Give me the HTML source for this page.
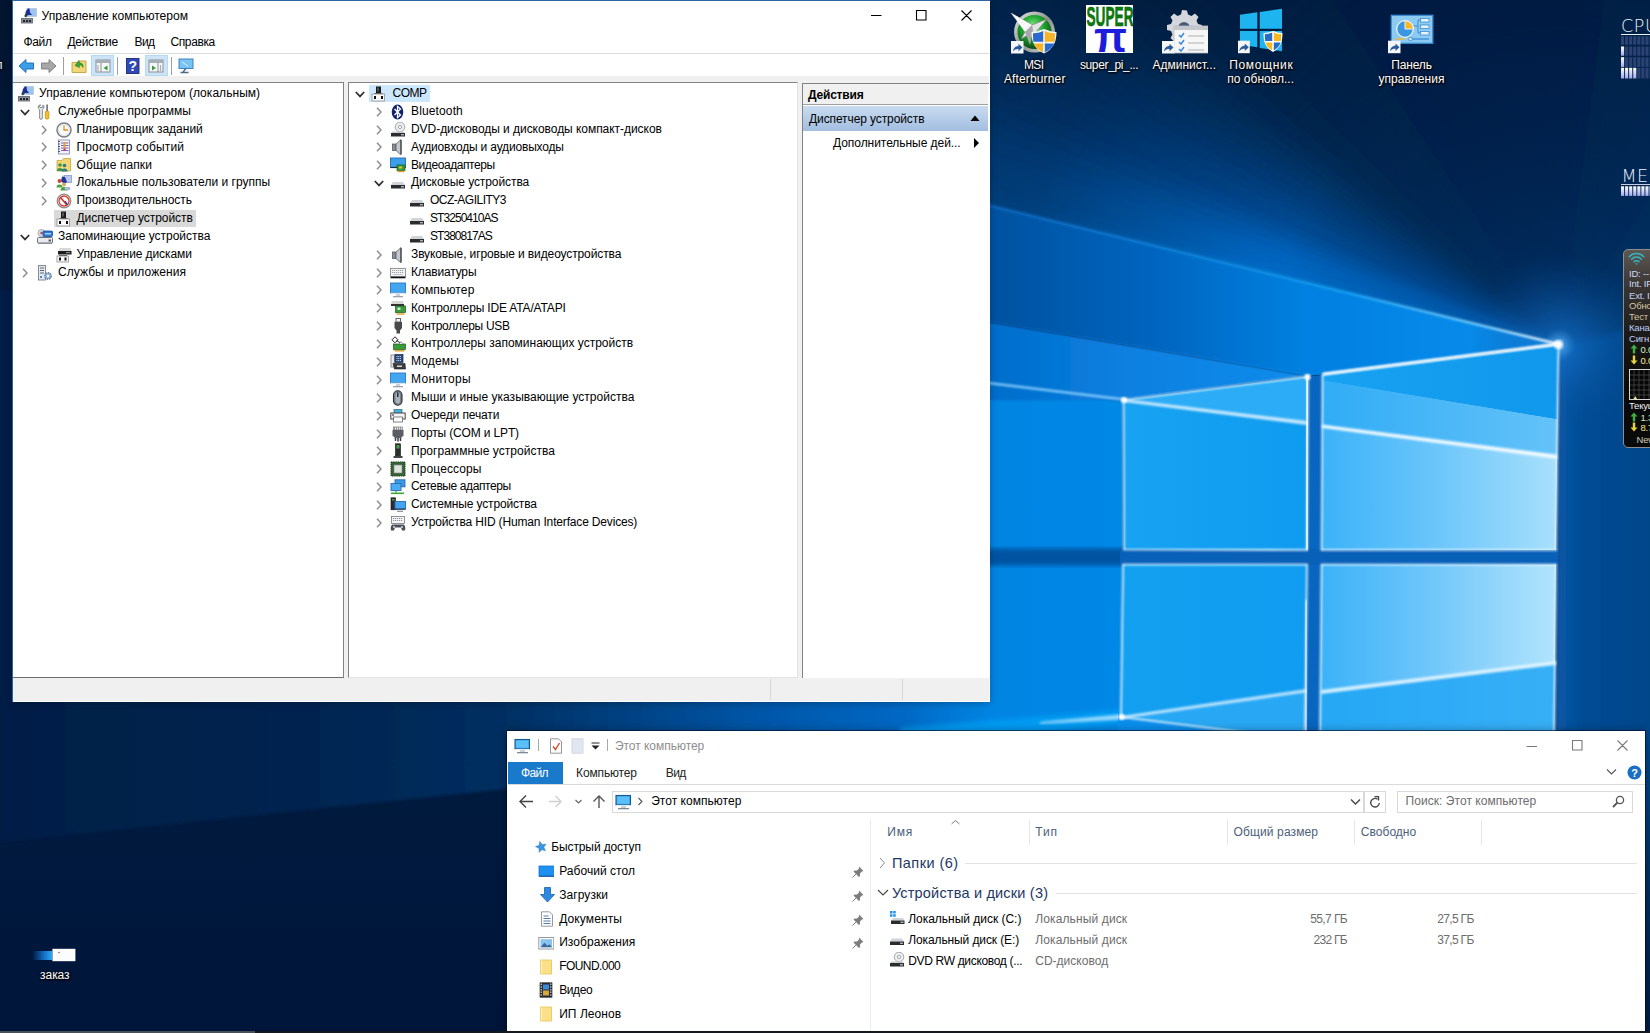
<!DOCTYPE html>
<html><head><meta charset="utf-8"><title>Desktop</title>
<style>
html,body{margin:0;padding:0}
body{width:1650px;height:1033px;overflow:hidden;position:relative;background:#031b40;font-family:"Liberation Sans",sans-serif;font-size:12px;color:#000}
.t{position:absolute;white-space:nowrap;line-height:16px;height:16px;font-size:12px;color:#000}
.dl{color:#fff;text-shadow:0 1px 2px rgba(0,0,0,.95),0 0 3px rgba(0,0,0,.8),1px 1px 1px rgba(0,0,0,.6)}
.g{position:absolute;left:1629px;white-space:nowrap;font-size:9.500px;line-height:12px;height:12px;letter-spacing:-0.200px}
.w{position:absolute;white-space:nowrap;font-family:'DejaVu Sans Light','DejaVu Sans','Liberation Sans',sans-serif;font-weight:200;font-size:17.500px;line-height:22px;height:22px;color:#eef2fb}
</style></head><body>
<svg id="wall" width="1650" height="1033" viewBox="0 0 1650 1033" style="position:absolute;left:0;top:0">
<defs>
<linearGradient id="bg" x1="0" y1="0" x2="0" y2="1">
 <stop offset="0" stop-color="#02142f"/><stop offset="0.2" stop-color="#021a3c"/><stop offset="0.78" stop-color="#001a3e"/><stop offset="1" stop-color="#00153a"/>
</linearGradient>
<radialGradient id="fanm" gradientUnits="userSpaceOnUse" cx="1559" cy="344" r="900">
 <stop offset="0" stop-color="#fff"/><stop offset="0.32" stop-color="#fff"/><stop offset="0.5" stop-color="#fff" stop-opacity="0.65"/><stop offset="0.6" stop-color="#fff" stop-opacity="0.45"/><stop offset="0.8" stop-color="#fff" stop-opacity="0.33"/><stop offset="1" stop-color="#fff" stop-opacity="0.3"/>
</radialGradient>
<mask id="fmask" maskUnits="userSpaceOnUse" x="0" y="-200" width="1650" height="1300"><rect x="0" y="-200" width="1650" height="1300" fill="url(#fanm)"/></mask>
<linearGradient id="regB" gradientUnits="userSpaceOnUse" x1="960" y1="0" x2="1559" y2="0">
 <stop offset="0" stop-color="#004e9a"/><stop offset="0.32" stop-color="#0064be"/><stop offset="0.57" stop-color="#0080e0"/><stop offset="1" stop-color="#0a90f0"/>
</linearGradient>
<linearGradient id="regC" gradientUnits="userSpaceOnUse" x1="960" y1="0" x2="1309" y2="0">
 <stop offset="0" stop-color="#0068c6"/><stop offset="0.47" stop-color="#0a80e0"/><stop offset="1" stop-color="#0a8cec"/>
</linearGradient>
<linearGradient id="beamC" gradientUnits="userSpaceOnUse" x1="0" y1="0" x2="1130" y2="0">
 <stop offset="0" stop-color="#001e46"/><stop offset="0.28" stop-color="#002450"/><stop offset="0.44" stop-color="#002e60"/><stop offset="0.56" stop-color="#004284"/><stop offset="0.66" stop-color="#0054a4"/><stop offset="0.8" stop-color="#0068c4"/><stop offset="0.875" stop-color="#0484e2"/><stop offset="1" stop-color="#0488e6"/>
</linearGradient>
<linearGradient id="pTL" gradientUnits="userSpaceOnUse" x1="1124" y1="0" x2="1307" y2="0">
 <stop offset="0" stop-color="#18a2f2"/><stop offset="1" stop-color="#0e9cf0"/>
</linearGradient>
<linearGradient id="pTR" gradientUnits="userSpaceOnUse" x1="1322" y1="0" x2="1556" y2="0">
 <stop offset="0" stop-color="#3cb2f8"/><stop offset="0.5" stop-color="#6cc6fa"/><stop offset="1" stop-color="#a8e0fc"/>
</linearGradient>
<linearGradient id="pTR1" gradientUnits="userSpaceOnUse" x1="1322" y1="0" x2="1556" y2="0">
 <stop offset="0" stop-color="#18a2f2"/><stop offset="1" stop-color="#1098ec"/>
</linearGradient>
<linearGradient id="pTR2" gradientUnits="userSpaceOnUse" x1="1322" y1="0" x2="1556" y2="0">
 <stop offset="0" stop-color="#30acf6"/><stop offset="1" stop-color="#64c2f8"/>
</linearGradient>
<linearGradient id="pBL" gradientUnits="userSpaceOnUse" x1="1124" y1="0" x2="1307" y2="0">
 <stop offset="0" stop-color="#14a0f0"/><stop offset="1" stop-color="#109cf0"/>
</linearGradient>
<linearGradient id="pBR" gradientUnits="userSpaceOnUse" x1="1322" y1="0" x2="1556" y2="0">
 <stop offset="0" stop-color="#3cb2f8"/><stop offset="0.5" stop-color="#74c8fa"/><stop offset="1" stop-color="#b2e4fc"/>
</linearGradient>
<radialGradient id="glow2" gradientUnits="userSpaceOnUse" cx="1559" cy="344" r="320">
 <stop offset="0" stop-color="#0050a0" stop-opacity="0.5"/><stop offset="0.3" stop-color="#004080" stop-opacity="0.35"/><stop offset="1" stop-color="#003060" stop-opacity="0"/>
</radialGradient>
<radialGradient id="glowR" gradientUnits="userSpaceOnUse" cx="1559" cy="345" r="90">
 <stop offset="0" stop-color="#58b4f8" stop-opacity="0.95"/><stop offset="0.18" stop-color="#1470c8" stop-opacity="0.6"/><stop offset="1" stop-color="#0a4a90" stop-opacity="0"/>
</radialGradient>
<linearGradient id="rightside" gradientUnits="userSpaceOnUse" x1="1556" y1="0" x2="1650" y2="0">
 <stop offset="0" stop-color="#0a58a8"/><stop offset="0.3" stop-color="#004c94"/><stop offset="1" stop-color="#00468a"/>
</linearGradient>
<linearGradient id="rsv" gradientUnits="userSpaceOnUse" x1="0" y1="740" x2="0" y2="1033"><stop offset="0" stop-color="#00468a"/><stop offset="0.4" stop-color="#003468"/><stop offset="1" stop-color="#001c42"/></linearGradient>
<linearGradient id="gapsh" x1="0" y1="0" x2="0" y2="1">
 <stop offset="0" stop-color="#084a92"/><stop offset="0.6" stop-color="#084a92" stop-opacity="0.9"/><stop offset="1" stop-color="#084a92" stop-opacity="0"/>
</linearGradient>
<linearGradient id="streak" gradientUnits="userSpaceOnUse" x1="1559" y1="344" x2="960" y2="198">
 <stop offset="0" stop-color="#ffffff"/><stop offset="0.12" stop-color="#7ccffc"/><stop offset="0.35" stop-color="#18a0f4"/><stop offset="1" stop-color="#0a6cc8" stop-opacity="0.6"/>
</linearGradient>
<filter id="b12" x="-10%" y="-10%" width="120%" height="120%"><feGaussianBlur stdDeviation="10"/></filter>
<filter id="b3" x="-10%" y="-10%" width="120%" height="120%"><feGaussianBlur stdDeviation="2.5"/></filter>
<filter id="b2" x="-10%" y="-10%" width="120%" height="120%"><feGaussianBlur stdDeviation="1.5"/></filter>
<filter id="b1" x="-10%" y="-10%" width="120%" height="120%"><feGaussianBlur stdDeviation="0.8"/></filter>
</defs>
<rect width="1650" height="1033" fill="url(#bg)"/>
<g mask="url(#fmask)"><g filter="url(#b1)">
<polygon points="1559,344 -578.8,-175.6 -569.0,-214.3" fill="#0070cf"/>
<polygon points="1559,344 -570.2,-209.8 -559.8,-248.4" fill="#006cc9"/>
<polygon points="1559,344 -561.0,-243.9 -548.7,-286.5" fill="#0069c5"/>
<polygon points="1559,344 -550.0,-282.1 -537.0,-324.4" fill="#0067c2"/>
<polygon points="1559,344 -538.4,-320.0 -524.6,-362.1" fill="#0065bf"/>
<polygon points="1559,344 -526.1,-357.7 -507.7,-410.1" fill="#0061b9"/>
<polygon points="1559,344 -509.3,-405.7 -489.7,-457.7" fill="#005baf"/>
<polygon points="1559,344 -491.4,-453.4 -470.7,-504.8" fill="#0055a5"/>
<polygon points="1559,344 -472.4,-500.6 -450.5,-551.5" fill="#004f9b"/>
<polygon points="1559,344 -452.4,-547.3 -430.5,-595.1" fill="#004a93"/>
<polygon points="1559,344 -432.4,-591.0 -409.5,-638.3" fill="#00488e"/>
<polygon points="1559,344 -411.6,-634.2 -387.6,-681.0" fill="#004488"/>
<polygon points="1559,344 -389.8,-677.0 -364.8,-723.3" fill="#004283"/>
<polygon points="1559,344 -367.0,-719.2 -336.7,-772.4" fill="#003e7c"/>
<polygon points="1559,344 -339.0,-768.4 -307.3,-820.8" fill="#003b76"/>
<polygon points="1559,344 -309.8,-816.9 -276.7,-868.5" fill="#00376e"/>
<polygon points="1559,344 -279.2,-864.7 -244.9,-915.4" fill="#003468"/>
<polygon points="1559,344 -247.5,-911.6 -216.3,-955.3" fill="#003162"/>
<polygon points="1559,344 -219.0,-951.6 -186.8,-994.7" fill="#002e5d"/>
<polygon points="1559,344 -189.6,-991.0 -156.5,-1033.3" fill="#002c59"/>
<polygon points="1559,344 -159.4,-1029.7 -125.3,-1071.3" fill="#002a55"/>
<polygon points="1559,344 -128.3,-1067.8 -93.3,-1108.6" fill="#002750"/>
<polygon points="1559,344 -96.3,-1105.1 -57.3,-1148.5" fill="#00264e"/>
<polygon points="1559,344 -60.4,-1145.1 -20.3,-1187.6" fill="#00254d"/>
<polygon points="1559,344 -23.5,-1184.2 17.5,-1225.7" fill="#01244c"/>
<polygon points="1559,344 14.3,-1222.5 56.4,-1262.9" fill="#01234b"/>
<polygon points="1559,344 53.0,-1259.7 96.1,-1299.1" fill="#01234b"/>
<polygon points="1559,344 92.6,-1296.0 136.6,-1334.4" fill="#01224a"/>
<polygon points="1559,344 133.1,-1331.4 178.1,-1368.6" fill="#022149"/>
<polygon points="1559,344 174.5,-1365.7 220.3,-1401.8" fill="#022048"/>
<polygon points="1559,344 216.7,-1399.0 264.0,-1434.4" fill="#022048"/>
<polygon points="1559,344 260.2,-1431.7 308.4,-1465.9" fill="#022047"/>
<polygon points="1559,344 304.6,-1463.3 353.5,-1496.3" fill="#022047"/>
<polygon points="1559,344 349.7,-1493.8 399.5,-1525.6" fill="#021f47"/>
<polygon points="1559,344 395.5,-1523.2 446.1,-1553.7" fill="#021f46"/>
<polygon points="1559,344 442.1,-1551.4 493.4,-1580.7" fill="#021f46"/>
<polygon points="1559,344 489.4,-1578.5 541.4,-1606.5" fill="#021f46"/>
<polygon points="1559,344 537.3,-1604.4 589.9,-1631.1" fill="#021f45"/>
<polygon points="1559,344 585.8,-1629.0 639.1,-1654.5" fill="#021e45"/>
<polygon points="1559,344 634.9,-1652.5 688.9,-1676.6" fill="#021e45"/>
<polygon points="1559,344 684.6,-1674.8 739.1,-1697.5" fill="#021e44"/>
<polygon points="1559,344 734.9,-1695.8 791.7,-1717.8" fill="#021e44"/>
<polygon points="1559,344 787.3,-1716.2 844.7,-1736.8" fill="#021e44"/>
<polygon points="1559,344 840.3,-1735.3 898.2,-1754.4" fill="#021e44"/>
<polygon points="1559,344 893.8,-1753.0 952.1,-1770.6" fill="#021e44"/>
<polygon points="1559,344 947.7,-1769.4 1006.4,-1785.5" fill="#021e44"/>
<polygon points="1559,344 1002.0,-1784.3 1061.1,-1798.9" fill="#021e44"/>
<polygon points="1559,344 1056.6,-1797.9 1116.1,-1811.0" fill="#021e44"/>
<polygon points="1559,344 1111.6,-1810.0 1171.4,-1821.6" fill="#021e44"/>
<polygon points="1559,344 1166.9,-1820.8 1227.0,-1830.8" fill="#021e44"/>
<polygon points="1559,344 1222.4,-1830.1 1282.8,-1838.6" fill="#021e44"/>
<polygon points="1559,344 1278.2,-1838.0 1338.7,-1844.9" fill="#021e44"/>
<polygon points="1559,344 1334.1,-1844.5 1394.8,-1849.9" fill="#021e44"/>
<polygon points="1559,344 1390.2,-1849.5 1451.0,-1853.3" fill="#021e44"/>
<polygon points="1559,344 1446.4,-1853.1 1507.3,-1855.4" fill="#021e44"/>
<polygon points="1559,344 1502.7,-1855.3 1563.6,-1856.0" fill="#021e44"/>
<polygon points="1559,344 1559.0,-1856.0 1621.2,-1855.1" fill="#021e44"/>
<polygon points="1559,344 1616.6,-1855.2 1678.7,-1852.7" fill="#021e45"/>
<polygon points="1559,344 1674.1,-1853.0 1736.2,-1848.9" fill="#021f45"/>
<polygon points="1559,344 1731.6,-1849.2 1793.5,-1843.5" fill="#021f46"/>
<polygon points="1559,344 1789.0,-1843.9 1850.7,-1836.6" fill="#021f46"/>
<polygon points="1559,344 1846.2,-1837.2 1907.7,-1828.2" fill="#022047"/>
<polygon points="1559,344 1903.2,-1828.9 1964.4,-1818.3" fill="#022047"/>
<polygon points="1559,344 1959.9,-1819.2 2020.9,-1807.0" fill="#022048"/>
<polygon points="1559,344 2016.4,-1807.9 2077.1,-1794.1" fill="#022148"/>
<polygon points="1559,344 2072.6,-1795.2 2132.9,-1779.8" fill="#022149"/>
<polygon points="1559,344 2128.4,-1781.0 2188.3,-1764.1" fill="#022149"/>
<polygon points="1559,344 2183.8,-1765.4 2243.2,-1746.9" fill="#02214a"/>
<polygon points="1559,344 2238.8,-1748.3 2297.7,-1728.3" fill="#02224a"/>
<polygon points="1559,344 2293.4,-1729.8 2351.7,-1708.2" fill="#02224b"/>
<polygon points="1559,344 2347.4,-1709.9 2405.2,-1686.8" fill="#02224b"/>
<polygon points="1559,344 2400.9,-1688.5 2458.0,-1663.9" fill="#02234c"/>
<polygon points="1559,344 2453.8,-1665.8 2510.3,-1639.7" fill="#02234c"/>
<polygon points="1559,344 2506.1,-1641.7 2561.9,-1614.1" fill="#02234d"/>
<polygon points="1559,344 2557.8,-1616.2 2612.8,-1587.2" fill="#02244d"/>
<polygon points="1559,344 2608.7,-1589.4 2663.0,-1558.9" fill="#02244e"/>
<polygon points="1559,344 2659.0,-1561.3 2712.4,-1529.4" fill="#02244e"/>
<polygon points="1559,344 2708.5,-1531.8 2761.1,-1498.6" fill="#02254f"/>
<polygon points="1559,344 2757.2,-1501.1 2808.9,-1466.5" fill="#022650"/>
<polygon points="1559,344 2805.1,-1469.1 2855.9,-1433.1" fill="#022651"/>
<polygon points="1559,344 2852.1,-1435.8 2901.9,-1398.6" fill="#022752"/>
<polygon points="1559,344 2898.3,-1401.4 2947.1,-1362.8" fill="#012752"/>
<polygon points="1559,344 2943.5,-1365.7 2991.3,-1325.9" fill="#012853"/>
<polygon points="1559,344 2987.8,-1328.9 3034.5,-1287.8" fill="#012854"/>
<polygon points="1559,344 3031.1,-1290.9 3076.7,-1248.6" fill="#012955"/>
<polygon points="1559,344 3073.4,-1251.8 3117.9,-1208.4" fill="#012a56"/>
<polygon points="1559,344 3114.6,-1211.6 3158.0,-1167.0" fill="#012a56"/>
<polygon points="1559,344 3154.8,-1170.4 3197.0,-1124.7" fill="#012b57"/>
<polygon points="1559,344 3193.9,-1128.1 3234.9,-1081.3" fill="#012c58"/>
<polygon points="1559,344 3231.9,-1084.8 3271.6,-1036.9" fill="#012c59"/>
<polygon points="1559,344 3268.7,-1040.5 3307.2,-991.6" fill="#012d5a"/>
<polygon points="1559,344 3304.4,-995.3 3341.5,-945.4" fill="#002d5a"/>
<polygon points="1559,344 3338.8,-949.1 3374.7,-898.3" fill="#002e5b"/>
<polygon points="1559,344 3372.1,-902.1 3406.6,-850.3" fill="#002e5c"/>
<polygon points="1559,344 3404.1,-854.2 3437.2,-801.6" fill="#002f5d"/>
<polygon points="1559,344 3434.8,-805.5 3466.6,-752.0" fill="#00305e"/>
<polygon points="1559,344 3464.3,-756.0 3494.0,-702.8" fill="#00305f"/>
<polygon points="1559,344 3491.8,-706.9 3520.1,-653.0" fill="#003160"/>
<polygon points="1559,344 3518.1,-657.1 3545.0,-602.4" fill="#003261"/>
<polygon points="1559,344 3543.0,-606.6 3568.6,-551.3" fill="#003263"/>
<polygon points="1559,344 3566.7,-555.5 3590.8,-499.6" fill="#003364"/>
<polygon points="1559,344 3589.1,-503.8 3611.8,-447.3" fill="#003465"/>
<polygon points="1559,344 3610.1,-451.6 3631.4,-394.5" fill="#003467"/>
<polygon points="1559,344 3629.8,-398.8 3649.6,-341.2" fill="#003568"/>
<polygon points="1559,344 3648.1,-345.6 3666.4,-287.5" fill="#003669"/>
<polygon points="1559,344 3665.1,-291.9 3681.9,-233.3" fill="#00366b"/>
<polygon points="1559,344 3680.7,-237.8 3696.0,-178.8" fill="#00376c"/>
<polygon points="1559,344 3694.9,-183.3 3708.7,-123.9" fill="#00386d"/>
<polygon points="1559,344 3707.7,-128.4 3719.9,-68.7" fill="#00386f"/>
<polygon points="1559,344 3719.1,-73.3 3729.8,-13.3" fill="#003970"/>
<polygon points="1559,344 3729.0,-17.8 3738.2,42.4" fill="#003a71"/>
</g></g>
<circle cx="1559" cy="344" r="320" fill="url(#glow2)"/>
<polygon points="1559,344 960,198 960,317 1309,376 1322,374.5" fill="url(#regB)"/>
<!-- right side of logo -->
<polygon points="1557,346 1660,322 1660,770 1554,770" fill="url(#rightside)" filter="url(#b3)"/>
<rect x="1600" y="740" width="60" height="300" fill="url(#rsv)"/>
<!-- left-lower beam -->
<polygon points="1124,400 0,290 0,842 505,789 1000,741 1124,736" fill="url(#beamC)" filter="url(#b2)"/>
<polygon points="1122,710 1122,723 900,748 900,728" fill="#00a2f8" opacity="0.8" filter="url(#b3)"/>
<polygon points="1121,714.500 1121,719.500 1040,724 1040,722" fill="#c8ecff" opacity="0.8" filter="url(#b2)"/>
<polygon points="1310,376 960,317 960,400 1124,400.5" fill="url(#regC)" filter="url(#b1)"/>
<!-- gap shadow -->
<rect x="930" y="548.500" width="196" height="17" fill="#0052a0" filter="url(#b3)"/>
<polygon points="1118,712 1553,700 1553,770 1118,770" fill="#0a8eee"/>
<polygon points="1306,377 1324,374.500 1324,770 1304,770" fill="#0866c0"/>
<rect x="1120" y="549" width="438" height="16" fill="#0860b8"/>
<circle cx="1559" cy="345" r="90" fill="url(#glowR)"/>
<polygon points="1559,343 960,196.500 960,200 1559,345.500" fill="url(#streak)" filter="url(#b1)"/>
<!-- panes -->
<polygon points="1123.5,400 1308,376.5 1307,550 1124,549.5" fill="url(#pTL)"/>
<polygon points="1124,400 1307,376.500 1307,423 " fill="#2cacf6"/>
<polygon points="1322.5,374.5 1558.5,344.5 1556,550 1321.5,550" fill="url(#pTR)"/>
<polygon points="1322.500,374.500 1558.500,344.500 1557.500,419.500 1322.400,380.600" fill="url(#pTR1)"/>
<polygon points="1322.400,380.600 1557.500,419.500 1557,456 1322.200,426" fill="url(#pTR2)"/>
<polygon points="1123,564.5 1307,564.5 1305,740 1121,717" fill="url(#pBL)"/>
<polygon points="1121,717 1306,691 1305,740" fill="#28a8f4"/>
<polygon points="1321.5,564.5 1556,564.5 1554,760 1320,740" fill="url(#pBR)"/>
<polygon points="1320.500,692 1555.500,663 1554,760 1320,740" fill="#22a6f4" opacity="0.85"/>
<!-- light lines in panes -->
<polygon points="1124,399 1307,421 1307,425 1124,402" fill="#d8f0ff" opacity="0.9" filter="url(#b1)"/>
<polygon points="1322,424.500 1557,454.500 1557,459 1322,428" fill="#f0faff" opacity="0.95" filter="url(#b1)"/>
<polygon points="1321,690 1556,661 1556,665 1321,694" fill="#e4f6ff" opacity="0.9" filter="url(#b1)"/>
<polygon points="1121,716 1306,689 1306,692.500 1121,719" fill="#d0ecff" opacity="0.85" filter="url(#b1)"/>
<!-- pane edges -->
<g fill="none" stroke="#eaf8ff" stroke-width="1.6" filter="url(#b1)">
<polygon points="1123.5,400 1308,376.5 1307,550 1124,549.5"/>
<polygon points="1322.5,374.5 1558.5,344.5 1556,550 1321.5,550"/>
<polyline points="1305,740 1121,717 1123,564.5 1307,564.5 1305,740"/>
<polyline points="1320,740 1321.5,564.5 1556,564.5 1554,760"/>
</g>
<line x1="1307.5" y1="377" x2="1307" y2="550" stroke="#ffffff" stroke-width="3" filter="url(#b1)"/>
<line x1="1306.500" y1="600" x2="1305.500" y2="735" stroke="#ffffff" stroke-width="3" filter="url(#b2)" opacity="0.8"/>
<line x1="1124" y1="399.500" x2="960" y2="379.500" stroke="#8cd0ff" stroke-width="2.5" filter="url(#b1)" opacity="0.9"/>
<line x1="1558" y1="344" x2="1323" y2="374" stroke="#ffffff" stroke-width="2.5" filter="url(#b1)"/>
<circle cx="1558.500" cy="344.500" r="4.500" fill="#fff" filter="url(#b2)"/>
<circle cx="1124" cy="400" r="3" fill="#fff" filter="url(#b1)"/>
<circle cx="1307.500" cy="377" r="3" fill="#fff" filter="url(#b1)"/>
<circle cx="1121.500" cy="717" r="3" fill="#fff" filter="url(#b1)"/>
</svg>
<svg style="position:absolute;left:1010px;top:6px" width="48" height="48" viewBox="0 0 48 48"><defs><radialGradient id="msig" cx="0.45" cy="0.35" r="0.7"><stop offset="0" stop-color="#8ff08f"/><stop offset="0.45" stop-color="#22a832"/><stop offset="1" stop-color="#083c14"/></radialGradient><linearGradient id="msir" x1="0" y1="0" x2="1" y2="1"><stop offset="0" stop-color="#e8ece8"/><stop offset="0.5" stop-color="#8a948a"/><stop offset="1" stop-color="#d0d6d0"/></linearGradient></defs><circle cx="24.500" cy="26" r="20.500" fill="url(#msir)"/><circle cx="24.500" cy="26" r="17" fill="url(#msig)"/><path d="M1 7l21 12 15-6-11 13 3 17-9-15-9 5 5-9z" fill="#e4e4e4" stroke="#7a7a7a" stroke-width="0.700"/><path d="M1 7l21 12-7 7z" fill="#f8f8f8"/><path d="M22 19l-7 7 5 13 3-15z" fill="#a8a8a8"/><path d="M21.500 26c5 0 8-1.500 12.500-3 4.500 1.500 7.500 3 12.500 3 0 10-3 17-12.500 21.500-9.500-4.500-12.500-11.500-12.500-21.500z" fill="#fff" opacity="0.92"/><path d="M23 27.300c4 0 7-1 10.200-2.300v10.800h-9.700c-0.400-2.600-0.500-5.300-0.500-8.500z" fill="#2a6ad0"/><path d="M34.800 25c3.200 1.300 6.200 2.300 10.200 2.300 0 3.200-0.100 5.900-0.500 8.500h-9.700z" fill="#f8b428"/><path d="M23.800 37.400h9.400v8.800c-5-2.400-8-5-9.400-8.800z" fill="#f8b428"/><path d="M34.800 37.400h9.400c-1.400 3.800-4.400 6.400-9.400 8.800z" fill="#2a6ad0"/><rect x="1" y="35" width="12.500" height="12.500" fill="#f4f6f8"/><path d="M3 45.5c0.500-4 3-5.500 5.500-5.500v-2.300l4 3.800-4 3.800v-2.300c-2.500 0-4 0.500-5.500 2.500z" fill="#2a5a9a"/></svg>
<div class="t dl" style="left:1023.9px;top:57px;letter-spacing:-0.622px;">MSI</div>
<div class="t dl" style="left:1003.9px;top:71px;letter-spacing:0.147px;">Afterburner</div>
<svg style="position:absolute;left:1085px;top:5.3px" width="48" height="48" viewBox="0 0 48 48"><rect x="1" y="0" width="48" height="48" fill="#fff"/><text x="1.500" y="21" font-family="Liberation Sans, sans-serif" font-weight="bold" font-size="28" fill="#0c7c0c" stroke="#0a5a0a" stroke-width="0.600" textLength="47" lengthAdjust="spacingAndGlyphs">SUPER</text><text x="9" y="47.300" font-family="Liberation Sans, sans-serif" font-weight="bold" font-size="43" fill="#1c1cdc" textLength="33" lengthAdjust="spacingAndGlyphs">π</text></svg>
<div class="t dl" style="left:1079.9px;top:57px;letter-spacing:-0.356px;">super_pi_...</div>
<svg style="position:absolute;left:1160px;top:6px" width="48" height="48" viewBox="0 0 48 48"><path d="M22 4l5 0.500 1 4 3.500 1.500 3.500-2.500 3.500 3.500-2 3.500 1.500 3.500 4 1v5l-4 1-1.500 3.500 2 3.500-3.500 3.500-3.500-2-3.500 1.500-1 4h-5l-1-4-3.500-1.500-3.500 2-3.500-3.500 2-3.500-1.500-3.500-4-1v-5l4-1 1.500-3.500-2-3.500 3.500-3.500 3.500 2.500 3.500-1.500z" fill="#d4d8dc"/><circle cx="24" cy="22" r="6" fill="#4a5a78"/><rect x="14" y="20" width="35" height="27" fill="#f6f6f6" stroke="#b8bcc0" stroke-width="0.800"/><rect x="14" y="20" width="35" height="4" fill="#c4c8cc"/><path d="M19 29l2 2 3-4M19 36l2 2 3-4M19 43l2 2 3-4" fill="none" stroke="#3a8ad8" stroke-width="1.500"/><path d="M28 30h16M28 37h16M28 44h16" stroke="#c8c8c8" stroke-width="1.500"/><rect x="2" y="35" width="12.500" height="12.500" fill="#f4f6f8"/><path d="M4 45.5c0.500-4 3-5.500 5.500-5.500v-2.300l4 3.800-4 3.800v-2.300c-2.500 0-4 0.500-5.500 2.500z" fill="#2a5a9a"/></svg>
<div class="t dl" style="left:1152.5px;top:57px;letter-spacing:0.003px;">Админист...</div>
<svg style="position:absolute;left:1238px;top:6px" width="48" height="48" viewBox="0 0 48 48"><path d="M2 8.800l17.300-2.600v16.500h-17.300z" fill="#1eb4f0"/><path d="M21.700 6l22.300-3.300v20h-22.300z" fill="#1eb4f0"/><path d="M2 25h17.300v16.200l-17.300-2.500z" fill="#1eb4f0"/><path d="M21.700 25h22.300v20.300l-22.300-3.300z" fill="#1eb4f0"/><path d="M25.500 27c4 0 6-1 9.500-2 3.500 1 5.500 2 9.500 2 0 9-2 15-9.500 19-7.500-4-9.500-10-9.500-19z" fill="#fff"/><path d="M26.800 28.200c3 0 5-0.800 7.400-1.700v8.500h-7c-0.300-2-0.400-4-0.400-6.800z" fill="#2a6ac8"/><path d="M35.800 26.500c2.400 0.900 4.400 1.700 7.400 1.700 0 2.800-0.100 4.800-0.400 6.800h-7z" fill="#f8b820"/><path d="M27.500 36.600h6.700v7.900c-3.500-2-5.700-4.400-6.700-7.900z" fill="#f8b820"/><path d="M35.800 36.600h6.700c-1 3.500-3.200 5.900-6.700 7.900z" fill="#2a6ac8"/><rect x="-0.7" y="34.7" width="12.500" height="12.500" fill="#f4f6f8"/><path d="M1.3 45.2c0.500-4 3-5.500 5.500-5.500v-2.300l4 3.800-4 3.800v-2.300c-2.500 0-4 0.500-5.500 2.500z" fill="#2a5a9a"/></svg>
<div class="t dl" style="left:1229.2px;top:57px;letter-spacing:0.688px;">Помощник</div>
<div class="t dl" style="left:1227.2px;top:71px;letter-spacing:0.030px;">по обновл...</div>
<svg style="position:absolute;left:1387px;top:6px" width="48" height="48" viewBox="0 0 48 48"><rect x="4.300" y="9.300" width="41.500" height="28" fill="#8ccaf2" stroke="#3a8cd4" stroke-width="1.300"/><circle cx="18" cy="23" r="8.300" fill="#3a96e0" stroke="#e8f4fc" stroke-width="1.300"/><path d="M18 23v-8.300a8.300 8.300 0 0 1 8.300 8.300z" fill="#f8b820" stroke="#e8f4fc" stroke-width="1"/><path d="M27 20h4v-6h3M31 20v7h3M31 20v0" fill="none" stroke="#3a8cd4" stroke-width="1"/><rect x="33.500" y="12.500" width="8.500" height="3.500" fill="#e8f4fc" stroke="#3a8cd4" stroke-width="0.800"/><rect x="33.500" y="19" width="8.500" height="3.500" fill="#e8f4fc" stroke="#3a8cd4" stroke-width="0.800"/><rect x="33.500" y="25.500" width="8.500" height="3.500" fill="#e8f4fc" stroke="#3a8cd4" stroke-width="0.800"/><path d="M8 33h10" stroke="#f8b820" stroke-width="1.300"/><path d="M25 33h17" stroke="#3a8cd4" stroke-width="1.300"/><rect x="22" y="31.300" width="3" height="3" fill="#e8f4fc" stroke="#3a8cd4" stroke-width="0.700"/><rect x="1" y="34.7" width="12.500" height="12.500" fill="#f4f6f8"/><path d="M3 45.2c0.500-4 3-5.500 5.500-5.500v-2.300l4 3.800-4 3.800v-2.300c-2.500 0-4 0.500-5.500 2.500z" fill="#2a5a9a"/></svg>
<div class="t dl" style="left:1391.2px;top:57px;letter-spacing:-0.134px;">Панель</div>
<div class="t dl" style="left:1378.5px;top:71px;letter-spacing:0.061px;">управления</div>
<svg style="position:absolute;left:30px;top:940px" width="48" height="48" viewBox="0 0 48 48"><defs><linearGradient id="zg" x1="0" y1="0" x2="1" y2="0"><stop offset="0" stop-color="#1a7ae0" stop-opacity="0"/><stop offset="0.6" stop-color="#1a86ea" stop-opacity="0.8"/><stop offset="1" stop-color="#30a8f8"/></linearGradient><filter id="zb"><feGaussianBlur stdDeviation="0.700"/></filter></defs><rect x="2" y="11" width="20" height="9" fill="url(#zg)" filter="url(#zb)"/><rect x="22.400" y="8.800" width="23" height="12.400" fill="#fcfcfc"/><circle cx="29" cy="12.500" r="0.800" fill="#666"/></svg>
<div class="t dl" style="left:40.1px;top:967px;letter-spacing:-0.059px;">заказ</div>
<div class="t dl" style="left:-4.500px;top:57px">л</div>
<div class="w" style="left:1621px;top:15px;letter-spacing:0.600px">CPU</div>
<div style="position:absolute;left:1621px;top:34px;width:30px;height:1px;background:#eef2fb"></div>
<svg style="position:absolute;left:1621px;top:36px" width="30" height="44" viewBox="0 0 30 44"><defs><linearGradient id="barg" x1="0" y1="0" x2="0" y2="1"><stop offset="0" stop-color="#ffffff"/><stop offset="1" stop-color="#a4a8ea"/></linearGradient></defs><rect x="0" y="0.3" width="3.100" height="8.5" fill="#2b4273"/><rect x="4.07" y="0.3" width="3.100" height="8.5" fill="#2b4273"/><rect x="8.14" y="0.3" width="3.100" height="8.5" fill="#2b4273"/><rect x="12.21" y="0.3" width="3.100" height="8.5" fill="#2b4273"/><rect x="16.28" y="0.3" width="3.100" height="8.5" fill="#2b4273"/><rect x="20.35" y="0.3" width="3.100" height="8.5" fill="#2b4273"/><rect x="24.42" y="0.3" width="3.100" height="8.5" fill="#2b4273"/><rect x="28.49" y="0.3" width="3.100" height="8.5" fill="#2b4273"/><rect x="0" y="10.5" width="3.100" height="9.2" fill="url(#barg)"/><rect x="4.07" y="10.5" width="3.100" height="9.2" fill="#2b4273"/><rect x="8.14" y="10.5" width="3.100" height="9.2" fill="#2b4273"/><rect x="12.21" y="10.5" width="3.100" height="9.2" fill="#2b4273"/><rect x="16.28" y="10.5" width="3.100" height="9.2" fill="#2b4273"/><rect x="20.35" y="10.5" width="3.100" height="9.2" fill="#2b4273"/><rect x="24.42" y="10.5" width="3.100" height="9.2" fill="#2b4273"/><rect x="28.49" y="10.5" width="3.100" height="9.2" fill="#2b4273"/><rect x="0" y="21.2" width="3.100" height="9.7" fill="url(#barg)"/><rect x="4.07" y="21.2" width="3.100" height="9.7" fill="#2b4273"/><rect x="8.14" y="21.2" width="3.100" height="9.7" fill="#2b4273"/><rect x="12.21" y="21.2" width="3.100" height="9.7" fill="#2b4273"/><rect x="16.28" y="21.2" width="3.100" height="9.7" fill="#2b4273"/><rect x="20.35" y="21.2" width="3.100" height="9.7" fill="#2b4273"/><rect x="24.42" y="21.2" width="3.100" height="9.7" fill="#2b4273"/><rect x="28.49" y="21.2" width="3.100" height="9.7" fill="#2b4273"/><rect x="0" y="31.8" width="3.100" height="10.7" fill="url(#barg)"/><rect x="4.07" y="31.8" width="3.100" height="10.7" fill="url(#barg)"/><rect x="8.14" y="31.8" width="3.100" height="10.7" fill="url(#barg)"/><rect x="12.21" y="31.8" width="3.100" height="10.7" fill="url(#barg)"/><rect x="16.28" y="31.8" width="3.100" height="10.7" fill="#2b4273"/><rect x="20.35" y="31.8" width="3.100" height="10.7" fill="#2b4273"/><rect x="24.42" y="31.8" width="3.100" height="10.7" fill="#2b4273"/><rect x="28.49" y="31.8" width="3.100" height="10.7" fill="#2b4273"/></svg>
<div class="w" style="left:1621.500px;top:165px;letter-spacing:0.300px">MEM</div>
<div style="position:absolute;left:1621px;top:183.500px;width:30px;height:1px;background:#c8cede"></div>
<svg style="position:absolute;left:1621px;top:185.500px" width="30" height="12" viewBox="0 0 30 12"><rect x="0" y="0.300" width="3.100" height="9.600" fill="url(#barg)"/><rect x="4.07" y="0.300" width="3.100" height="9.600" fill="url(#barg)"/><rect x="8.14" y="0.300" width="3.100" height="9.600" fill="url(#barg)"/><rect x="12.21" y="0.300" width="3.100" height="9.600" fill="url(#barg)"/><rect x="16.28" y="0.300" width="3.100" height="9.600" fill="url(#barg)"/><rect x="20.35" y="0.300" width="3.100" height="9.600" fill="url(#barg)"/><rect x="24.42" y="0.300" width="3.100" height="9.600" fill="url(#barg)"/><rect x="28.49" y="0.300" width="3.100" height="9.600" fill="url(#barg)"/></svg>
<div style="position:absolute;left:1622.500px;top:248.500px;width:40px;height:199px;background:linear-gradient(#5e5752,#3a3634 18%,#1a1816 45%,#0a0a0a 70%);border:1.500px solid #8e8e8e;border-radius:5px;box-sizing:border-box"></div>
<svg style="position:absolute;left:1628px;top:251.500px" width="17" height="13" viewBox="0 0 17 13"><g fill="none" stroke="#35b4c6" stroke-width="1.500" stroke-linecap="round"><path d="M1.200 4.800a9.800 9.800 0 0 1 14.600 0"/><path d="M3.600 7.300a6.600 6.600 0 0 1 9.800 0"/><path d="M6 9.800a3.400 3.400 0 0 1 5 0"/></g><circle cx="8.500" cy="11.800" r="0.900" fill="#35b4c6"/></svg>
<div class="g" style="top:268px;color:#ccd9f6">ID: --</div>
<div class="g" style="top:278px;color:#ccd9f6">Int. IP</div>
<div class="g" style="top:290px;color:#c4d4f8">Ext. IP</div>
<div class="g" style="top:300px;color:#d6c6a2">Обнов</div>
<div class="g" style="top:311px;color:#d6c6a2">Тест с</div>
<div class="g" style="top:322px;color:#b8cef6">Канал</div>
<div class="g" style="top:333px;color:#c0d2f6">Сигн.</div>
<div class="g" style="top:344px;left:1630px;color:#d4f0c4"><svg width="8" height="10" viewBox="0 0 8 10" style="vertical-align:-1px;margin-right:2.500px"><path d="M4 0.500l3.500 4h-2.300v5h-2.400v-5h-2.300z" fill="#3fb03f"/></svg>0.0</div>
<div class="g" style="top:355px;left:1630px;color:#f6eea0"><svg width="8" height="10" viewBox="0 0 8 10" style="vertical-align:-1px;margin-right:2.500px"><path d="M4 9.500l3.500-4h-2.300v-5h-2.400v5h-2.300z" fill="#e6d43c"/></svg>0.0</div>
<svg style="position:absolute;left:1629px;top:369px" width="24" height="31" viewBox="0 0 24 31"><rect x="0.500" y="0.500" width="30" height="30" fill="#060606" stroke="#d8d8d8"/><path d="M5 1v29M10 1v29M15 1v29M20 1v29M1 6h24M1 11h24M1 16h24M1 21h24M1 26h24" stroke="#505050" stroke-width="0.700"/><path d="M4.500 30l1.800-3 1.800 3z" fill="#e8e480"/></svg>
<div class="g" style="top:400px;color:#f0f2f6">Текущ</div>
<div class="g" style="top:412px;left:1630px;color:#c8ecc0"><svg width="8" height="10" viewBox="0 0 8 10" style="vertical-align:-1px;margin-right:2.500px"><path d="M4 0.500l3.500 4h-2.300v5h-2.400v-5h-2.300z" fill="#3fb03f"/></svg>1.3</div>
<div class="g" style="top:422px;left:1630px;color:#f6e88c"><svg width="8" height="10" viewBox="0 0 8 10" style="vertical-align:-1px;margin-right:2.500px"><path d="M4 9.500l3.500-4h-2.300v-5h-2.400v5h-2.300z" fill="#e6d43c"/></svg>8.7</div>
<div class="g" style="top:434px;left:1636.500px;color:#cfcdb6">New</div>
<div id="mmc" style="position:absolute;left:0;top:0;width:1650px;height:710px">
<div style="position:absolute;left:11.500px;top:0;width:978px;height:701.500px;background:#fff;border-left:1.500px solid #2d64a6;border-top:1px solid #2d64a6;box-sizing:border-box;box-shadow:0 1px 7px rgba(0,0,0,.28)"></div>
<div style="position:absolute;left:13px;top:1px;width:976px;height:700px;background:#fff"></div>
<!-- title -->
<svg style="position:absolute;left:21px;top:7.5px" width="16" height="16" viewBox="0 0 16 16"><rect x="6" y="0.500" width="9.500" height="8" fill="#9cc4ee" stroke="#b8c8dc" stroke-width="0.800"/><path d="M5 3l2-2.500h1.500l0.500 4 2 2.500h-7z" fill="#1c2a9c"/><path d="M3 8l3-3 1.500 1.500-2.500 3z" fill="#2a3c55"/><rect x="0.500" y="10.500" width="11" height="4.500" fill="#8a9098" stroke="#5a6068" stroke-width="0.800"/><rect x="2" y="12" width="2" height="2" fill="#22262c"/><rect x="5" y="12" width="2" height="2" fill="#22262c"/><rect x="8" y="12" width="2" height="2" fill="#22262c"/></svg>
<div class="t" style="left:41.5px;top:7.5px;font-size:12.1px">Управление компьютером</div>
<svg style="position:absolute;left:866px;top:5px" width="112" height="22" viewBox="0 0 112 22"><path d="M5 10.5h10.5 M50.5 5.5h9.5v9.5h-9.500z M95.500 5.500l10 10 M105.500 5.500l-10 10" fill="none" stroke="#000" stroke-width="1.1"/></svg>
<!-- menu -->
<div class="t" style="left:23.5px;top:33.5px;letter-spacing:-0.35px">Файл</div>
<div class="t" style="left:67.5px;top:33.5px;letter-spacing:-0.3px">Действие</div>
<div class="t" style="left:134.5px;top:33.5px;letter-spacing:-0.6px">Вид</div>
<div class="t" style="left:170.5px;top:33.5px;letter-spacing:-0.4px">Справка</div>
<div style="position:absolute;left:13px;top:53px;width:976px;height:1px;background:#dcdcdc"></div>
<!-- toolbar -->
<div style="position:absolute;left:91px;top:55px;width:23px;height:21px;background:#cce4f7;border:1px solid #b5d8f3;box-sizing:border-box"></div>
<div style="position:absolute;left:144.5px;top:55px;width:23px;height:21px;background:#cce4f7;border:1px solid #b5d8f3;box-sizing:border-box"></div>
<div style="position:absolute;left:63px;top:56.5px;width:1px;height:18px;background:#a0a0a0"></div>
<div style="position:absolute;left:116.5px;top:56.5px;width:1px;height:18px;background:#a0a0a0"></div>
<div style="position:absolute;left:170.5px;top:56.5px;width:1px;height:18px;background:#a0a0a0"></div>
<svg style="position:absolute;left:18px;top:57.5px" width="16" height="16" viewBox="0 0 16 16"><path d="M1 8l7-6.500v3.500h7.500v6h-7.500v3.500z" fill="#3a9ee8" stroke="#1a6ab8" stroke-width="0.900"/></svg>
<svg style="position:absolute;left:41px;top:57.5px" width="16" height="16" viewBox="0 0 16 16"><path d="M15 8l-7-6.500v3.500h-7.500v6h7.500v3.500z" fill="#a8a8a8" stroke="#787878" stroke-width="0.900"/></svg>
<svg style="position:absolute;left:71px;top:57.5px" width="16" height="16" viewBox="0 0 16 16"><path d="M1 4.500h5l1.500-1.500h7.500v11.500h-14z" fill="#f0d878" stroke="#c0a040" stroke-width="0.900"/><path d="M4 7.500l4-5 0.500 2.500c3 0 4 2 3.500 4.500-1-2-2-2.500-4-2.500l0.500 2.500z" fill="#3aa83a" stroke="#1a6a1a" stroke-width="0.500"/></svg>
<svg style="position:absolute;left:94.5px;top:57.5px" width="16" height="16" viewBox="0 0 16 16"><rect x="1" y="2" width="14" height="12" fill="#f4f6f8" stroke="#8a9098" stroke-width="1"/><rect x="1" y="2" width="14" height="3" fill="#a8aeb6"/><path d="M6 5v9" stroke="#8a9098" stroke-width="1"/><path d="M12.500 7.500v5l-4-2.500z" fill="#3a9a3a"/><path d="M3 7v6" stroke="#a8aeb6" stroke-width="1.200"/></svg>
<svg style="position:absolute;left:125px;top:57.5px" width="16" height="16" viewBox="0 0 16 16"><rect x="1.500" y="0.500" width="12.500" height="15" fill="#3048b8" stroke="#1a2a78" stroke-width="0.900"/><text x="7.800" y="13" font-size="14" font-weight="bold" text-anchor="middle" fill="#fff" font-family="Liberation Sans, sans-serif">?</text></svg>
<svg style="position:absolute;left:148px;top:57.5px" width="16" height="16" viewBox="0 0 16 16"><rect x="1" y="2" width="14" height="12" fill="#f4f6f8" stroke="#8a9098" stroke-width="1"/><rect x="1" y="2" width="14" height="3" fill="#a8aeb6"/><path d="M10 5v9" stroke="#8a9098" stroke-width="1"/><path d="M4 7.500v5l4-2.500z" fill="#3a9a3a"/><path d="M12.500 7v6" stroke="#a8aeb6" stroke-width="1.200"/></svg>
<svg style="position:absolute;left:178px;top:57.5px" width="16" height="16" viewBox="0 0 16 16"><rect x="1" y="1" width="14" height="9.500" fill="#7ac4f4" stroke="#3a84c0" stroke-width="1"/><path d="M8 10.500l-3 3.500M2.500 14.500h8" stroke="#4a6a8a" stroke-width="1.300"/><path d="M4 4l6 4" stroke="#d8eefc" stroke-width="1"/></svg>
<div style="position:absolute;left:13px;top:76px;width:976px;height:7px;background:#f0f0f0"></div>
<div style="position:absolute;left:13px;top:677.5px;width:976px;height:23.5px;background:#f0f0f0"></div>
<div style="position:absolute;left:770px;top:679px;width:1px;height:21px;background:#d7d7d7"></div>
<div style="position:absolute;left:902px;top:679px;width:1px;height:21px;background:#d7d7d7"></div>
<!-- panes -->
<div style="position:absolute;left:13px;top:82px;width:331px;height:596px;background:#fff;border-top:1.5px solid #828282;border-right:1.5px solid #828282;border-bottom:1px solid #6e6e6e;box-sizing:border-box"></div>
<div style="position:absolute;left:344px;top:83px;width:3.5px;height:595px;background:#f0f0f0"></div>
<div style="position:absolute;left:347.500px;top:82px;width:450px;height:596px;background:#fff;border-top:1.5px solid #828282;border-left:1.5px solid #828282;border-right:1px solid #e3e3e3;border-bottom:1px solid #e3e3e3;box-sizing:border-box"></div>
<div style="position:absolute;left:797.5px;top:83px;width:4px;height:595px;background:#f0f0f0"></div>
<div style="position:absolute;left:801.5px;top:82.5px;width:187.5px;height:595.5px;background:#fff;border-top:1.5px solid #828282;border-left:1.5px solid #828282;box-sizing:border-box"></div>
<div style="position:absolute;left:803px;top:84px;width:185px;height:20px;background:#f0f0f0;border-bottom:1px solid #a0a0a0"></div>
<div class="t" style="left:808px;top:86.500px;font-weight:bold;letter-spacing:-0.2px">Действия</div>
<div style="position:absolute;left:803px;top:105.5px;width:185px;height:25px;background:linear-gradient(#c9dbf0,#a3bee0)"></div>
<div class="t" style="left:809px;top:110.5px;letter-spacing:-0.1px">Диспетчер устройств</div>
<svg style="position:absolute;left:969px;top:114px" width="12" height="8"><path d="M1.500 7 L6 1.500 L10.500 7z" fill="#000"/></svg>
<div class="t" style="left:833px;top:135px;letter-spacing:-0.05px">Дополнительные дей...</div>
<svg style="position:absolute;left:973px;top:137px" width="7" height="12"><path d="M1 1 L6 6 L1 11z" fill="#000"/></svg>
<svg style="position:absolute;left:18px;top:85.8px" width="16" height="16" viewBox="0 0 16 16"><rect x="6" y="0.500" width="9.500" height="8" fill="#9cc4ee" stroke="#b8c8dc" stroke-width="0.800"/><path d="M5 3l2-2.500h1.500l0.500 4 2 2.500h-7z" fill="#1c2a9c"/><path d="M3 8l3-3 1.500 1.500-2.500 3z" fill="#2a3c55"/><rect x="0.500" y="10.500" width="11" height="4.500" fill="#8a9098" stroke="#5a6068" stroke-width="0.800"/><rect x="2" y="12" width="2" height="2" fill="#22262c"/><rect x="5" y="12" width="2" height="2" fill="#22262c"/><rect x="8" y="12" width="2" height="2" fill="#22262c"/></svg>
<div class="t" style="left:39px;top:85px;letter-spacing:0.047px;">Управление компьютером (локальным)</div>
<svg style="position:absolute;left:20.2px;top:108.68px" width="10" height="7" viewBox="0 0 10 7"><path d="M0.8 1 L5 5.4 L9.2 1" fill="none" stroke="#2e2e2e" stroke-width="1.700"/></svg>
<svg style="position:absolute;left:37px;top:103.68px" width="16" height="16" viewBox="0 0 16 16"><path d="M3.500 0.800a2.300 2.300 0 0 0-2 3.400l1.200 1.300v8.500a1.300 1.300 0 0 0 2.600 0v-8.500l1.200-1.300a2.300 2.300 0 0 0-0.500-3.200l-0.200 2.200-1.800 0.600-1.600-1z" fill="#f4f4f4" stroke="#70747a" stroke-width="0.900"/><rect x="9.300" y="0.500" width="1.600" height="6.500" fill="#6a6e74"/><rect x="8.300" y="7" width="3.600" height="8" rx="1.300" fill="#f2c12a" stroke="#b8860b" stroke-width="0.700"/></svg>
<div class="t" style="left:58px;top:103px;letter-spacing:0.100px;">Служебные программы</div>
<svg style="position:absolute;left:40.8px;top:124.56px" width="6" height="10" viewBox="0 0 6 10"><path d="M1 0.8 L5 5 L1 9.2" fill="none" stroke="#8e8e8e" stroke-width="1.500"/></svg>
<svg style="position:absolute;left:56px;top:121.56px" width="16" height="16" viewBox="0 0 16 16"><circle cx="8" cy="8" r="7" fill="#fdfdfd" stroke="#7a7f88" stroke-width="1.500"/><circle cx="8" cy="8" r="5.300" fill="none" stroke="#d4d8de" stroke-width="0.800"/><path d="M8 3.500v4.500h4" fill="none" stroke="#e08a1c" stroke-width="1.300"/></svg>
<div class="t" style="left:76.5px;top:121px;letter-spacing:-0.006px;">Планировщик заданий</div>
<svg style="position:absolute;left:40.8px;top:142.44px" width="6" height="10" viewBox="0 0 6 10"><path d="M1 0.8 L5 5 L1 9.2" fill="none" stroke="#8e8e8e" stroke-width="1.500"/></svg>
<svg style="position:absolute;left:56px;top:139.44px" width="16" height="16" viewBox="0 0 16 16"><rect x="2.500" y="1" width="11" height="14" fill="#f2f2fb" stroke="#8a93b0" stroke-width="0.900"/><path d="M2 2.500h2M2 5h2M2 7.500h2M2 10h2M2 12.500h2" stroke="#4a5688" stroke-width="1"/><path d="M5 4h7.500M5 6.500h7.500M5 9h7.500M5 11.500h7.500" stroke="#7a62c4" stroke-width="1.200"/><path d="M8.500 3v6" stroke="#e8a020" stroke-width="2"/><rect x="7.500" y="9.500" width="2" height="2" fill="#d03030"/></svg>
<div class="t" style="left:76.5px;top:139px;letter-spacing:0.143px;">Просмотр событий</div>
<svg style="position:absolute;left:40.8px;top:160.32px" width="6" height="10" viewBox="0 0 6 10"><path d="M1 0.8 L5 5 L1 9.2" fill="none" stroke="#8e8e8e" stroke-width="1.500"/></svg>
<svg style="position:absolute;left:56px;top:157.32px" width="16" height="16" viewBox="0 0 16 16"><path d="M1 3.500h5l1.500-2h7v12.500h-13.500z" fill="#f3d673" stroke="#c8a53a" stroke-width="0.800"/><circle cx="4" cy="8" r="1.800" fill="#3a9a4a"/><path d="M1 14a3 3 0 0 1 6 0z" fill="#3a9a4a"/><circle cx="8.500" cy="8.500" r="1.800" fill="#2d7a8a"/><path d="M5.500 14.500a3 3 0 0 1 6 0z" fill="#2d7a8a"/></svg>
<div class="t" style="left:76.5px;top:157px;letter-spacing:0.098px;">Общие папки</div>
<svg style="position:absolute;left:40.8px;top:178.2px" width="6" height="10" viewBox="0 0 6 10"><path d="M1 0.8 L5 5 L1 9.2" fill="none" stroke="#8e8e8e" stroke-width="1.500"/></svg>
<svg style="position:absolute;left:56px;top:175.2px" width="16" height="16" viewBox="0 0 16 16"><rect x="8" y="0.500" width="7.500" height="7" fill="#b9c8ee" stroke="#8a98c0" stroke-width="0.800"/><path d="M6 1.500l3 0.500 2 5-3 2-3-3z" fill="#24349a"/><circle cx="3.500" cy="6" r="2" fill="#c84a30"/><path d="M0.500 12.500a3 3 0 0 1 6 0z" fill="#4aa040"/><circle cx="8" cy="9.500" r="2" fill="#d8a860"/><path d="M4.500 15.500a3.500 3.500 0 0 1 7 0z" fill="#4aa040"/><ellipse cx="11.500" cy="13.500" rx="3" ry="1.800" fill="#a8b8d8"/></svg>
<div class="t" style="left:76.5px;top:174px;letter-spacing:0.008px;">Локальные пользователи и группы</div>
<svg style="position:absolute;left:40.8px;top:196.08px" width="6" height="10" viewBox="0 0 6 10"><path d="M1 0.8 L5 5 L1 9.2" fill="none" stroke="#8e8e8e" stroke-width="1.500"/></svg>
<svg style="position:absolute;left:56px;top:193.08px" width="16" height="16" viewBox="0 0 16 16"><circle cx="8" cy="8" r="6.800" fill="#fff" stroke="#8c8c8c" stroke-width="1.300"/><circle cx="8" cy="8" r="5" fill="none" stroke="#d43a2a" stroke-width="1.300"/><path d="M4.500 4.500l6.500 7.500" stroke="#d43a2a" stroke-width="1.800"/><path d="M9 8l2.500 4" stroke="#2a3a9a" stroke-width="1.200"/></svg>
<div class="t" style="left:76.5px;top:192px;letter-spacing:-0.064px;">Производительность</div>
<div style="position:absolute;left:54px;top:209.66px;width:142px;height:17px;background:#d9d9d9"></div>
<svg style="position:absolute;left:56px;top:210.96px" width="16" height="16" viewBox="0 0 16 16"><rect x="5" y="0.500" width="5" height="7" fill="#1a1a1a"/><rect x="6.500" y="1.500" width="1" height="4" fill="#888"/><rect x="1" y="8" width="12.500" height="7" fill="#fbfbfb" stroke="#9a9a9a" stroke-width="0.900"/><path d="M3.500 7.500h8" stroke="#6a6a6a" stroke-width="1"/><rect x="3" y="10" width="2" height="3" fill="#111"/><rect x="10" y="10" width="2" height="3" fill="#111"/></svg>
<div class="t" style="left:76.5px;top:210px;letter-spacing:-0.057px;">Диспетчер устройств</div>
<svg style="position:absolute;left:20.2px;top:233.84px" width="10" height="7" viewBox="0 0 10 7"><path d="M0.8 1 L5 5.4 L9.2 1" fill="none" stroke="#2e2e2e" stroke-width="1.700"/></svg>
<svg style="position:absolute;left:37px;top:228.84px" width="16" height="16" viewBox="0 0 16 16"><circle cx="4.500" cy="4" r="3.500" fill="#d8dce4" stroke="#9aa0aa" stroke-width="0.800"/><circle cx="4.500" cy="4" r="1.200" fill="#c04040"/><rect x="6" y="2" width="9.500" height="5.500" rx="1" fill="#2a7ad4" stroke="#1a4a90" stroke-width="0.800"/><rect x="8" y="4" width="6" height="1.500" fill="#9fd0ff"/><rect x="0.500" y="8.500" width="15" height="5.500" rx="1" fill="#e8eaee" stroke="#6a7078" stroke-width="1"/><rect x="11.500" y="10.500" width="2.500" height="2" fill="#5a6068"/><path d="M1 14.500h14" stroke="#8a9098" stroke-width="1"/></svg>
<div class="t" style="left:58px;top:228px;letter-spacing:-0.017px;">Запоминающие устройства</div>
<svg style="position:absolute;left:56px;top:246.72px" width="16" height="16" viewBox="0 0 16 16"><rect x="3" y="1" width="12" height="3" fill="#d8d8d8"/><rect x="2" y="4" width="13.500" height="3.500" fill="#1c1c1c"/><rect x="10" y="5" width="4" height="1.200" fill="#8a8a8a"/><rect x="1" y="9" width="11.500" height="6" fill="#fbfbfb" stroke="#9a9a9a" stroke-width="0.900"/><path d="M3 8.500h8" stroke="#6a6a6a" stroke-width="1"/><rect x="3" y="10.500" width="2" height="3" fill="#111"/><rect x="8.500" y="10.500" width="2" height="3" fill="#111"/></svg>
<div class="t" style="left:76.5px;top:246px;letter-spacing:-0.088px;">Управление дисками</div>
<svg style="position:absolute;left:22.2px;top:267.6px" width="6" height="10" viewBox="0 0 6 10"><path d="M1 0.8 L5 5 L1 9.2" fill="none" stroke="#8e8e8e" stroke-width="1.500"/></svg>
<svg style="position:absolute;left:37px;top:264.6px" width="16" height="16" viewBox="0 0 16 16"><rect x="1.500" y="0.500" width="7" height="14.500" fill="#e4e8ee" stroke="#7a8088" stroke-width="0.900"/><path d="M3 3h4M3 5.500h4M3 8h4" stroke="#5a6a7a" stroke-width="1.100"/><rect x="3" y="11" width="2" height="2" fill="#4a8ad0"/><circle cx="11" cy="11" r="3.300" fill="#9ab4d4" stroke="#5a7aa0" stroke-width="1.300" stroke-dasharray="1.500 1"/><circle cx="11" cy="11" r="1.200" fill="#fff"/></svg>
<div class="t" style="left:58px;top:264px;letter-spacing:0.054px;">Службы и приложения</div>
<div style="position:absolute;left:369px;top:84.5px;width:61px;height:17px;background:#cce8ff"></div>
<svg style="position:absolute;left:354.5px;top:90.8px" width="10" height="7" viewBox="0 0 10 7"><path d="M0.8 1 L5 5.4 L9.2 1" fill="none" stroke="#2e2e2e" stroke-width="1.700"/></svg>
<svg style="position:absolute;left:371px;top:85.8px" width="16" height="16" viewBox="0 0 16 16"><rect x="5" y="0.500" width="5" height="7" fill="#1a1a1a"/><rect x="6.500" y="1.500" width="1" height="4" fill="#888"/><rect x="1" y="8" width="12.500" height="7" fill="#fbfbfb" stroke="#9a9a9a" stroke-width="0.900"/><path d="M3.500 7.500h8" stroke="#6a6a6a" stroke-width="1"/><rect x="3" y="10" width="2" height="3" fill="#111"/><rect x="10" y="10" width="2" height="3" fill="#111"/></svg>
<div class="t" style="left:392.5px;top:85px;letter-spacing:-0.467px;">COMP</div>
<svg style="position:absolute;left:375.5px;top:106.68px" width="6" height="10" viewBox="0 0 6 10"><path d="M1 0.8 L5 5 L1 9.2" fill="none" stroke="#8e8e8e" stroke-width="1.500"/></svg>
<svg style="position:absolute;left:390px;top:103.68px" width="16" height="16" viewBox="0 0 16 16"><ellipse cx="7.500" cy="8" rx="5.800" ry="7.500" fill="#10246a"/><path d="M4.500 5l6 6-3 2.500v-11l3 2.500-6 6" fill="none" stroke="#fff" stroke-width="1.300"/></svg>
<div class="t" style="left:411px;top:103px;letter-spacing:0.135px;">Bluetooth</div>
<svg style="position:absolute;left:375.5px;top:124.56px" width="6" height="10" viewBox="0 0 6 10"><path d="M1 0.8 L5 5 L1 9.2" fill="none" stroke="#8e8e8e" stroke-width="1.500"/></svg>
<svg style="position:absolute;left:390px;top:121.56px" width="16" height="16" viewBox="0 0 16 16"><circle cx="10" cy="5" r="4.800" fill="#eceef0" stroke="#9a9ea4" stroke-width="0.900"/><circle cx="10" cy="5" r="1.600" fill="#fff" stroke="#8a8e94" stroke-width="0.800"/><path d="M2.500 9.500h11l1.500 2h-14z" fill="#c8ccd0"/><rect x="1" y="11" width="14" height="3.500" fill="#2a2c30"/><rect x="11" y="12.300" width="3" height="1" fill="#e8e8e8"/></svg>
<div class="t" style="left:411px;top:121px;letter-spacing:-0.044px;">DVD-дисководы и дисководы компакт-дисков</div>
<svg style="position:absolute;left:375.5px;top:142.44px" width="6" height="10" viewBox="0 0 6 10"><path d="M1 0.8 L5 5 L1 9.2" fill="none" stroke="#8e8e8e" stroke-width="1.500"/></svg>
<svg style="position:absolute;left:390px;top:139.44px" width="16" height="16" viewBox="0 0 16 16"><rect x="2.500" y="5" width="3.500" height="6.500" fill="#8a8e94" stroke="#4a4e54" stroke-width="0.700"/><path d="M6 5l5-4.500v15.500l-5-4.500z" fill="#c4c8cc" stroke="#5a5e64" stroke-width="0.800"/><path d="M11 1v14" stroke="#3a3e44" stroke-width="1.200"/></svg>
<div class="t" style="left:411px;top:139px;letter-spacing:-0.171px;">Аудиовходы и аудиовыходы</div>
<svg style="position:absolute;left:375.5px;top:160.32px" width="6" height="10" viewBox="0 0 6 10"><path d="M1 0.8 L5 5 L1 9.2" fill="none" stroke="#8e8e8e" stroke-width="1.500"/></svg>
<svg style="position:absolute;left:390px;top:157.32px" width="16" height="16" viewBox="0 0 16 16"><rect x="0.500" y="1" width="15" height="9.500" fill="#3aa0ee" stroke="#2a6ab0" stroke-width="0.900"/><path d="M0.500 10.500h15" stroke="#1a2a3a" stroke-width="1.200"/><rect x="7" y="8" width="8" height="5.500" fill="#3a9a3a" stroke="#1a5a1a" stroke-width="0.700"/><rect x="9" y="9.500" width="3" height="2" fill="#d8c040"/><path d="M7.500 14.500h7" stroke="#d8a020" stroke-width="1.300"/></svg>
<div class="t" style="left:411px;top:157px;letter-spacing:-0.421px;">Видеоадаптеры</div>
<svg style="position:absolute;left:373.5px;top:180.2px" width="10" height="7" viewBox="0 0 10 7"><path d="M0.8 1 L5 5.4 L9.2 1" fill="none" stroke="#2e2e2e" stroke-width="1.700"/></svg>
<svg style="position:absolute;left:390px;top:175.2px" width="16" height="16" viewBox="0 0 16 16"><path d="M3 7h10l2 3h-14z" fill="#d0d4d8"/><rect x="1" y="10" width="14" height="3.500" fill="#2a2c30"/><rect x="11" y="11.300" width="3" height="1" fill="#e8e8e8"/></svg>
<div class="t" style="left:411px;top:174px;letter-spacing:-0.084px;">Дисковые устройства</div>
<svg style="position:absolute;left:409px;top:193.08px" width="16" height="16" viewBox="0 0 16 16"><path d="M3 7h10l2 3h-14z" fill="#d0d4d8"/><rect x="1" y="10" width="14" height="3.500" fill="#2a2c30"/><rect x="11" y="11.300" width="3" height="1" fill="#e8e8e8"/></svg>
<div class="t" style="left:430px;top:192px;letter-spacing:-0.501px;">OCZ-AGILITY3</div>
<svg style="position:absolute;left:409px;top:210.96px" width="16" height="16" viewBox="0 0 16 16"><path d="M3 7h10l2 3h-14z" fill="#d0d4d8"/><rect x="1" y="10" width="14" height="3.500" fill="#2a2c30"/><rect x="11" y="11.300" width="3" height="1" fill="#e8e8e8"/></svg>
<div class="t" style="left:430px;top:210px;letter-spacing:-0.946px;">ST3250410AS</div>
<svg style="position:absolute;left:409px;top:228.84px" width="16" height="16" viewBox="0 0 16 16"><path d="M3 7h10l2 3h-14z" fill="#d0d4d8"/><rect x="1" y="10" width="14" height="3.500" fill="#2a2c30"/><rect x="11" y="11.300" width="3" height="1" fill="#e8e8e8"/></svg>
<div class="t" style="left:430px;top:228px;letter-spacing:-0.955px;">ST380817AS</div>
<svg style="position:absolute;left:375.5px;top:249.72px" width="6" height="10" viewBox="0 0 6 10"><path d="M1 0.8 L5 5 L1 9.2" fill="none" stroke="#8e8e8e" stroke-width="1.500"/></svg>
<svg style="position:absolute;left:390px;top:246.72px" width="16" height="16" viewBox="0 0 16 16"><rect x="2.500" y="5" width="3.500" height="6.500" fill="#8a8e94" stroke="#4a4e54" stroke-width="0.700"/><path d="M6 5l5-4.500v15.500l-5-4.500z" fill="#c4c8cc" stroke="#5a5e64" stroke-width="0.800"/><path d="M11 1v14" stroke="#3a3e44" stroke-width="1.200"/></svg>
<div class="t" style="left:411px;top:246px;letter-spacing:-0.119px;">Звуковые, игровые и видеоустройства</div>
<svg style="position:absolute;left:375.5px;top:267.6px" width="6" height="10" viewBox="0 0 6 10"><path d="M1 0.8 L5 5 L1 9.2" fill="none" stroke="#8e8e8e" stroke-width="1.500"/></svg>
<svg style="position:absolute;left:390px;top:264.6px" width="16" height="16" viewBox="0 0 16 16"><rect x="0.500" y="3.500" width="15" height="8" fill="#f4f4f4" stroke="#8a8a8a" stroke-width="0.900"/><path d="M0.500 12.500h15" stroke="#111" stroke-width="1.600"/><path d="M2 5.500h12M2 7.500h12M3.500 9.500h9" stroke="#9aa0a8" stroke-width="1" stroke-dasharray="1.200 0.800"/></svg>
<div class="t" style="left:411px;top:264px;letter-spacing:-0.161px;">Клавиатуры</div>
<svg style="position:absolute;left:375.5px;top:285.48px" width="6" height="10" viewBox="0 0 6 10"><path d="M1 0.8 L5 5 L1 9.2" fill="none" stroke="#8e8e8e" stroke-width="1.500"/></svg>
<svg style="position:absolute;left:390px;top:282.48px" width="16" height="16" viewBox="0 0 16 16"><rect x="0.500" y="1" width="15" height="10" fill="#42a6f0" stroke="#2a78c0" stroke-width="0.900"/><path d="M0.500 11.300h15" stroke="#e8eef4" stroke-width="1"/><path d="M6 13h4" stroke="#9aa4b0" stroke-width="1"/><path d="M3 14.700h10" stroke="#8a94a0" stroke-width="1.100"/></svg>
<div class="t" style="left:411px;top:282px;letter-spacing:0.149px;">Компьютер</div>
<svg style="position:absolute;left:375.5px;top:303.36px" width="6" height="10" viewBox="0 0 6 10"><path d="M1 0.8 L5 5 L1 9.2" fill="none" stroke="#8e8e8e" stroke-width="1.500"/></svg>
<svg style="position:absolute;left:390px;top:300.36px" width="16" height="16" viewBox="0 0 16 16"><rect x="1.500" y="1" width="12" height="3" fill="#d4d6d8"/><path d="M1 5h13" stroke="#1a1a1a" stroke-width="1.800"/><rect x="5.500" y="6" width="10" height="6.500" fill="#3a9a3a" stroke="#1a5a1a" stroke-width="0.700"/><rect x="7.500" y="7.500" width="3" height="2.500" fill="#c8e8c8"/><path d="M6.500 14h8" stroke="#d8a020" stroke-width="1.400"/></svg>
<div class="t" style="left:411px;top:300px;letter-spacing:-0.157px;">Контроллеры IDE ATA/ATAPI</div>
<svg style="position:absolute;left:375.5px;top:321.24px" width="6" height="10" viewBox="0 0 6 10"><path d="M1 0.8 L5 5 L1 9.2" fill="none" stroke="#8e8e8e" stroke-width="1.500"/></svg>
<svg style="position:absolute;left:390px;top:318.24px" width="16" height="16" viewBox="0 0 16 16"><rect x="6" y="0.500" width="4.500" height="3.500" fill="#f4f4f4" stroke="#555" stroke-width="0.900"/><path d="M4.500 4h7.500v6l-2 2.500v3h-3.500v-3l-2-2.500z" fill="#4a4a4a"/></svg>
<div class="t" style="left:411px;top:318px;letter-spacing:-0.269px;">Контроллеры USB</div>
<svg style="position:absolute;left:375.5px;top:339.12px" width="6" height="10" viewBox="0 0 6 10"><path d="M1 0.8 L5 5 L1 9.2" fill="none" stroke="#8e8e8e" stroke-width="1.500"/></svg>
<svg style="position:absolute;left:390px;top:336.12px" width="16" height="16" viewBox="0 0 16 16"><path d="M5 0.800l3 3-3 3-3-3z" fill="#fff" stroke="#222" stroke-width="1"/><path d="M6.500 4.500l4 2.500" stroke="#222" stroke-width="1"/><rect x="3.500" y="8" width="12" height="5.500" fill="#3a9a3a" stroke="#1a5a1a" stroke-width="0.700"/><path d="M9 8l2-2.500 2 2.500" fill="#e8e8e8" stroke="#666" stroke-width="0.600"/><path d="M4.500 14.800h10" stroke="#d8a020" stroke-width="1.400"/></svg>
<div class="t" style="left:411px;top:335px;letter-spacing:0.004px;">Контроллеры запоминающих устройств</div>
<svg style="position:absolute;left:375.5px;top:357px" width="6" height="10" viewBox="0 0 6 10"><path d="M1 0.8 L5 5 L1 9.2" fill="none" stroke="#8e8e8e" stroke-width="1.500"/></svg>
<svg style="position:absolute;left:390px;top:354px" width="16" height="16" viewBox="0 0 16 16"><rect x="1" y="1" width="3.500" height="12" fill="#e8e8ea" stroke="#7a7a80" stroke-width="0.800"/><rect x="5" y="0.500" width="8" height="8" fill="#2a4a7a" stroke="#1a2a4a" stroke-width="0.700"/><path d="M6.500 2.500h5M6.500 4.500h5M6.500 6.500h5" stroke="#c8d8f0" stroke-width="1" stroke-dasharray="1 0.700"/><path d="M3 9.500h12l0.500 5.500h-11z" fill="#3a3c40" stroke="#1a1a1a" stroke-width="0.600"/><rect x="7" y="11.500" width="5" height="1.500" fill="#d8d8d8"/></svg>
<div class="t" style="left:411px;top:353px;letter-spacing:0.161px;">Модемы</div>
<svg style="position:absolute;left:375.5px;top:374.88px" width="6" height="10" viewBox="0 0 6 10"><path d="M1 0.8 L5 5 L1 9.2" fill="none" stroke="#8e8e8e" stroke-width="1.500"/></svg>
<svg style="position:absolute;left:390px;top:371.88px" width="16" height="16" viewBox="0 0 16 16"><rect x="0.500" y="1" width="15" height="10" fill="#42a6f0" stroke="#2a78c0" stroke-width="0.900"/><path d="M0.500 11.300h15" stroke="#e8eef4" stroke-width="1"/><path d="M6 13h4" stroke="#9aa4b0" stroke-width="1"/><path d="M3 14.700h10" stroke="#8a94a0" stroke-width="1.100"/></svg>
<div class="t" style="left:411px;top:371px;letter-spacing:0.319px;">Мониторы</div>
<svg style="position:absolute;left:375.5px;top:392.76px" width="6" height="10" viewBox="0 0 6 10"><path d="M1 0.8 L5 5 L1 9.2" fill="none" stroke="#8e8e8e" stroke-width="1.500"/></svg>
<svg style="position:absolute;left:390px;top:389.76px" width="16" height="16" viewBox="0 0 16 16"><rect x="3.500" y="0.800" width="8.500" height="14.400" rx="4.200" fill="#7a8088" stroke="#2a2e34" stroke-width="1.100"/><rect x="5.500" y="2.500" width="4.500" height="11" rx="2.200" fill="#aab2bc"/><rect x="7" y="2.500" width="1.500" height="4.500" fill="#2a2e34"/></svg>
<div class="t" style="left:411px;top:389px;letter-spacing:0.018px;">Мыши и иные указывающие устройства</div>
<svg style="position:absolute;left:375.5px;top:410.64px" width="6" height="10" viewBox="0 0 6 10"><path d="M1 0.8 L5 5 L1 9.2" fill="none" stroke="#8e8e8e" stroke-width="1.500"/></svg>
<svg style="position:absolute;left:390px;top:407.64px" width="16" height="16" viewBox="0 0 16 16"><rect x="4" y="1.500" width="8" height="4" fill="#4ab0d8" stroke="#2a6a8a" stroke-width="0.700"/><rect x="0.800" y="5" width="14.400" height="6" fill="#f4f4f4" stroke="#444" stroke-width="1"/><rect x="3.500" y="9" width="9" height="5" fill="#fff" stroke="#666" stroke-width="0.800"/><path d="M2 7h2" stroke="#222" stroke-width="1"/></svg>
<div class="t" style="left:411px;top:407px;letter-spacing:-0.125px;">Очереди печати</div>
<svg style="position:absolute;left:375.5px;top:428.52px" width="6" height="10" viewBox="0 0 6 10"><path d="M1 0.8 L5 5 L1 9.2" fill="none" stroke="#8e8e8e" stroke-width="1.500"/></svg>
<svg style="position:absolute;left:390px;top:425.52px" width="16" height="16" viewBox="0 0 16 16"><rect x="3.500" y="1" width="9" height="3" fill="#e8e8e8" stroke="#777" stroke-width="0.700"/><path d="M4.500 1v3M6.500 1v3M8.500 1v3M10.500 1v3" stroke="#777" stroke-width="0.700"/><path d="M2.500 4h11v5.500l-2.500 2.500h-6l-2.500-2.500z" fill="#5a5e64"/><path d="M5.500 12v3M8 12v3.500M10.500 12v3" stroke="#3a3e44" stroke-width="1.500"/></svg>
<div class="t" style="left:411px;top:425px;letter-spacing:-0.152px;">Порты (COM и LPT)</div>
<svg style="position:absolute;left:375.5px;top:446.4px" width="6" height="10" viewBox="0 0 6 10"><path d="M1 0.8 L5 5 L1 9.2" fill="none" stroke="#8e8e8e" stroke-width="1.500"/></svg>
<svg style="position:absolute;left:390px;top:443.4px" width="16" height="16" viewBox="0 0 16 16"><rect x="5.500" y="0.800" width="5" height="12" fill="#2a2e2a" stroke="#111" stroke-width="0.600"/><rect x="6.500" y="2" width="3" height="3.500" fill="#4aa04a"/><path d="M3.500 14h9" stroke="#333" stroke-width="1.800"/></svg>
<div class="t" style="left:411px;top:443px;letter-spacing:0.029px;">Программные устройства</div>
<svg style="position:absolute;left:375.5px;top:464.28px" width="6" height="10" viewBox="0 0 6 10"><path d="M1 0.8 L5 5 L1 9.2" fill="none" stroke="#8e8e8e" stroke-width="1.500"/></svg>
<svg style="position:absolute;left:390px;top:461.28px" width="16" height="16" viewBox="0 0 16 16"><rect x="1" y="1" width="14" height="14" fill="#3a6a3a" stroke="#1a3a1a" stroke-width="1" stroke-dasharray="1.500 0.700"/><rect x="2.500" y="2.500" width="11" height="11" fill="#2f5a2f"/><rect x="4" y="4" width="8" height="8" fill="#dfe3df" stroke="#8a908a" stroke-width="0.700"/></svg>
<div class="t" style="left:411px;top:461px;letter-spacing:0.111px;">Процессоры</div>
<svg style="position:absolute;left:375.5px;top:482.16px" width="6" height="10" viewBox="0 0 6 10"><path d="M1 0.8 L5 5 L1 9.2" fill="none" stroke="#8e8e8e" stroke-width="1.500"/></svg>
<svg style="position:absolute;left:390px;top:479.16px" width="16" height="16" viewBox="0 0 16 16"><rect x="5" y="0.800" width="10" height="7" fill="#3a9ae8" stroke="#2a6ab0" stroke-width="0.900"/><rect x="1" y="4.500" width="10" height="7" fill="#4aaaf4" stroke="#2a6ab0" stroke-width="0.900"/><path d="M6 11.500v2" stroke="#4a4" stroke-width="1.500"/><path d="M1 14.300h13" stroke="#3aa83a" stroke-width="1.600"/></svg>
<div class="t" style="left:411px;top:478px;letter-spacing:-0.398px;">Сетевые адаптеры</div>
<svg style="position:absolute;left:375.5px;top:500.04px" width="6" height="10" viewBox="0 0 6 10"><path d="M1 0.8 L5 5 L1 9.2" fill="none" stroke="#8e8e8e" stroke-width="1.500"/></svg>
<svg style="position:absolute;left:390px;top:497.04px" width="16" height="16" viewBox="0 0 16 16"><rect x="1" y="0.800" width="4.500" height="12" fill="#2a2e34" stroke="#111" stroke-width="0.600"/><rect x="2" y="2" width="2.500" height="1.500" fill="#4aa04a"/><rect x="5" y="4.500" width="10.500" height="7.500" fill="#42a6f0" stroke="#2a6ab0" stroke-width="0.900"/><path d="M5 12.200h10.500" stroke="#1a2a3a" stroke-width="1"/><path d="M7 14.300h6" stroke="#7a8490" stroke-width="1.100"/></svg>
<div class="t" style="left:411px;top:496px;letter-spacing:-0.145px;">Системные устройства</div>
<svg style="position:absolute;left:375.5px;top:517.92px" width="6" height="10" viewBox="0 0 6 10"><path d="M1 0.8 L5 5 L1 9.2" fill="none" stroke="#8e8e8e" stroke-width="1.500"/></svg>
<svg style="position:absolute;left:390px;top:514.92px" width="16" height="16" viewBox="0 0 16 16"><rect x="1.500" y="1.500" width="13" height="7" fill="#f4f4f4" stroke="#7a7a7a" stroke-width="0.800"/><path d="M3 3.500h10M3 5.500h10" stroke="#8a90a0" stroke-width="1" stroke-dasharray="1.200 0.800"/><path d="M2.500 9.500c-2 1-2 4-1.500 6h3l1-3h6l1 3h3c0.500-2 0.500-5-1.500-6z" fill="#4a4e58"/><circle cx="4" cy="12" r="1" fill="#ddd"/><circle cx="12" cy="12" r="1" fill="#ddd"/></svg>
<div class="t" style="left:411px;top:514px;letter-spacing:-0.167px;">Устройства HID (Human Interface Devices)</div>
</div>
<div id="exp" style="position:absolute;left:0;top:0;width:1650px;height:1033px">
<div style="position:absolute;left:507px;top:731px;width:1138px;height:310px;background:#fff;box-shadow:0 0 0 1px rgba(0,12,40,.6),0 0 9px rgba(0,0,0,.35)"></div>
<svg style="position:absolute;left:514px;top:738px" width="16" height="16" viewBox="0 0 16 16"><rect x="1" y="1.500" width="14.500" height="9.500" fill="#3fa9f0" stroke="#16588c" stroke-width="1.100"/><rect x="2.200" y="2.700" width="12" height="7" fill="#5cc0f8"/><path d="M0.800 11.500h15" stroke="#e4eaf0" stroke-width="1"/><path d="M6 13h5" stroke="#9aa4b0" stroke-width="1"/><path d="M3 14.700h11" stroke="#6a7480" stroke-width="1.100"/></svg>
<div style="position:absolute;left:538px;top:739px;width:1px;height:12px;background:#a9a9a9"></div>
<svg style="position:absolute;left:547.5px;top:738px" width="16" height="16" viewBox="0 0 16 16"><path d="M2.500 0.800h8l3 3v11.400h-11z" fill="#fdfdfd" stroke="#8a8a8a" stroke-width="0.900"/><path d="M5 8.500l2.500 3 4-6.500" fill="none" stroke="#d04a2a" stroke-width="1.400"/></svg>
<svg style="position:absolute;left:570px;top:738px" width="16" height="16" viewBox="0 0 16 16"><rect x="2" y="0.800" width="11" height="14.400" fill="#e2e6f0" stroke="#d0d4e0" stroke-width="0.900"/></svg>
<svg style="position:absolute;left:591px;top:742px" width="9" height="8"><path d="M0.500 1h8" stroke="#222" stroke-width="1"/><path d="M0.500 3.500h8l-4 4z" fill="#222"/></svg>
<div style="position:absolute;left:607px;top:739px;width:1px;height:12px;background:#a9a9a9"></div>
<div class="t" style="left:614.9px;top:738px;color:#8e8e8e;letter-spacing:-0.026px;">Этот компьютер</div>
<svg style="position:absolute;left:1521px;top:735px" width="112" height="22" viewBox="0 0 112 22"><path d="M5.500 11.500h10.500 M51.500 5.500h9.500v9.500h-9.500z M96.500 5.500l10 10 M106.500 5.500l-10 10" fill="none" stroke="#7a7a7a" stroke-width="1.1"/></svg>
<div style="position:absolute;left:507.5px;top:762px;width:55px;height:22px;background:#1979ca"></div>
<div class="t" style="left:521px;top:765px;color:#fff;letter-spacing:-0.672px;">Файл</div>
<div class="t" style="left:576.1px;top:765px;color:#222;letter-spacing:-0.151px;">Компьютер</div>
<div class="t" style="left:665.8px;top:765px;color:#222;letter-spacing:-0.609px;">Вид</div>
<div style="position:absolute;left:507.5px;top:784px;width:1137px;height:1px;background:#dadbdc"></div>
<svg style="position:absolute;left:1606px;top:768px" width="12" height="8"><path d="M1 1.500l4.500 4.500 4.500-4.500" fill="none" stroke="#555" stroke-width="1.1"/></svg>
<svg style="position:absolute;left:1626.5px;top:764.5px" width="15" height="15" viewBox="0 0 15 15"><circle cx="7.500" cy="7.500" r="7" fill="#1a6fc4"/><text x="7.500" y="11.500" font-size="11" font-weight="bold" text-anchor="middle" fill="#fff" font-family="Liberation Sans, sans-serif">?</text></svg>
<svg style="position:absolute;left:518px;top:794px" width="92" height="16" viewBox="0 0 92 16"><path d="M2 7.500h13 M8 1.500l-6 6 6 6" fill="none" stroke="#444" stroke-width="1.4"/><path d="M31 7.500h12 M37.500 2l5.500 5.500-5.500 5.500" fill="none" stroke="#d0d0d0" stroke-width="1.4"/><path d="M57.500 6l3 3 3-3" fill="none" stroke="#666" stroke-width="1.2"/><path d="M81 14v-12 M75.500 7.500l5.500-5.500 5.500 5.500" fill="none" stroke="#555" stroke-width="1.4"/></svg>
<div style="position:absolute;left:612px;top:790.5px;width:752px;height:22px;border:1px solid #d9d9d9;box-sizing:border-box;background:#fff"></div>
<svg style="position:absolute;left:615px;top:793.5px" width="16" height="16" viewBox="0 0 16 16"><rect x="1" y="1.500" width="14.500" height="9.500" fill="#3fa9f0" stroke="#16588c" stroke-width="1.100"/><rect x="2.200" y="2.700" width="12" height="7" fill="#5cc0f8"/><path d="M0.800 11.500h15" stroke="#e4eaf0" stroke-width="1"/><path d="M6 13h5" stroke="#9aa4b0" stroke-width="1"/><path d="M3 14.700h11" stroke="#6a7480" stroke-width="1.100"/></svg>
<svg style="position:absolute;left:637px;top:797px" width="6" height="9"><path d="M1.500 1l3.500 3.500-3.500 3.500" fill="none" stroke="#555" stroke-width="1.1"/></svg>
<div class="t" style="left:651.2px;top:793px;letter-spacing:0.036px;">Этот компьютер</div>
<svg style="position:absolute;left:1350px;top:798px" width="11" height="8"><path d="M1 1.500l4.500 4.500 4.500-4.500" fill="none" stroke="#444" stroke-width="1.4"/></svg>
<div style="position:absolute;left:1363.500px;top:790.5px;width:22px;height:22px;border:1px solid #d9d9d9;box-sizing:border-box;background:#fff"></div>
<svg style="position:absolute;left:1368.5px;top:795.5px" width="12" height="13" viewBox="0 0 12 13"><path d="M8.500 3.200A4.300 4.300 0 1 0 10.300 7" fill="none" stroke="#444" stroke-width="1.3"/><path d="M5.500 0.500h4v4" fill="none" stroke="#444" stroke-width="1.3"/></svg>
<div style="position:absolute;left:1397px;top:790.5px;width:235.500px;height:22px;border:1px solid #d9d9d9;box-sizing:border-box;background:#fff"></div>
<div class="t" style="left:1405.6px;top:793px;color:#6d6d6d;letter-spacing:0.047px;">Поиск: Этот компьютер</div>
<svg style="position:absolute;left:1612px;top:795px" width="13" height="13" viewBox="0 0 13 13"><circle cx="8" cy="5" r="3.600" fill="none" stroke="#555" stroke-width="1.300"/><path d="M5.500 7.500l-4.500 4.500" stroke="#555" stroke-width="1.800"/></svg>
<div style="position:absolute;left:869.5px;top:819px;width:1px;height:214px;background:#ececec"></div>
<svg style="position:absolute;left:532.5px;top:839px" width="16" height="16" viewBox="0 0 16 16"><path d="M8.500 0.800l2 4.700 5 0.500-3.800 3.400 1.100 5-4.300-2.600-4.300 2.600 1.100-5-3.800-3.400 5-0.500z" fill="#3a96e0" stroke="#2a78c0" stroke-width="0.500" transform="translate(1.600 1.600) rotate(-14 6.500 6.500) scale(0.780)"/></svg>
<div class="t" style="left:551.3px;top:839px;letter-spacing:-0.119px;">Быстрый доступ</div>
<svg style="position:absolute;left:538px;top:863.3px" width="16" height="16" viewBox="0 0 16 16"><rect x="1" y="3" width="15.500" height="10" fill="#1e90f0" stroke="#1a74d0" stroke-width="0.800"/><path d="M1 13.300h15.500" stroke="#1c5ea8" stroke-width="1.200"/></svg>
<div class="t" style="left:559.2px;top:863px;letter-spacing:0.034px;">Рабочий стол</div>
<svg style="position:absolute;left:852px;top:865.8px" width="12" height="12" viewBox="0 0 12 12"><path d="M7 0.500l4.500 4.500-1.500 0.500-2 2 0 2.500-1 1-5.500-5.500 1-1 2.500 0 2-2z" fill="#7d7d7d"/><path d="M4 8l-3.500 3.500" stroke="#7d7d7d" stroke-width="1"/></svg>
<svg style="position:absolute;left:538.5px;top:887px" width="16" height="16" viewBox="0 0 16 16"><path d="M5.500 0.500h6v7h4l-7 7.500-7-7.500h4z" fill="#2a8ae0" stroke="#1a60b0" stroke-width="0.800"/></svg>
<div class="t" style="left:559.2px;top:887px;letter-spacing:0.072px;">Загрузки</div>
<svg style="position:absolute;left:852px;top:889.5px" width="12" height="12" viewBox="0 0 12 12"><path d="M7 0.500l4.500 4.500-1.500 0.500-2 2 0 2.500-1 1-5.500-5.500 1-1 2.500 0 2-2z" fill="#7d7d7d"/><path d="M4 8l-3.500 3.500" stroke="#7d7d7d" stroke-width="1"/></svg>
<svg style="position:absolute;left:539px;top:911px" width="16" height="16" viewBox="0 0 16 16"><path d="M2.500 0.800h8l3 3v11.400h-11z" fill="#fdfdfd" stroke="#8a8f98" stroke-width="0.900"/><path d="M4.500 5h5M4.500 7.500h7M4.500 10h7M4.500 12.500h7" stroke="#5a7aa8" stroke-width="1"/></svg>
<div class="t" style="left:559.2px;top:911px;letter-spacing:0.118px;">Документы</div>
<svg style="position:absolute;left:852px;top:913.5px" width="12" height="12" viewBox="0 0 12 12"><path d="M7 0.500l4.500 4.500-1.500 0.500-2 2 0 2.500-1 1-5.500-5.500 1-1 2.500 0 2-2z" fill="#7d7d7d"/><path d="M4 8l-3.500 3.500" stroke="#7d7d7d" stroke-width="1"/></svg>
<svg style="position:absolute;left:538px;top:934.8px" width="16" height="16" viewBox="0 0 16 16"><rect x="0.800" y="2.500" width="15" height="11.500" fill="#fdfdfd" stroke="#8a8f98" stroke-width="0.900"/><rect x="2.500" y="4.200" width="11.500" height="8" fill="#8ac4ee"/><path d="M2.500 12.200l4-4.500 3 3 2-1.500 2.500 3z" fill="#3a6a9a"/></svg>
<div class="t" style="left:559.2px;top:934px;letter-spacing:0.058px;">Изображения</div>
<svg style="position:absolute;left:852px;top:937.3px" width="12" height="12" viewBox="0 0 12 12"><path d="M7 0.500l4.500 4.500-1.500 0.500-2 2 0 2.500-1 1-5.500-5.500 1-1 2.500 0 2-2z" fill="#7d7d7d"/><path d="M4 8l-3.500 3.500" stroke="#7d7d7d" stroke-width="1"/></svg>
<svg style="position:absolute;left:538px;top:958.5px" width="16" height="16" viewBox="0 0 16 16"><path d="M2.500 1h11v14h-11z" fill="#fbe08a" stroke="#e8c860" stroke-width="0.900"/><path d="M3.500 1.500v13" stroke="#fff0b8" stroke-width="1.300"/></svg>
<div class="t" style="left:559.2px;top:958px;letter-spacing:-0.566px;">FOUND.000</div>
<svg style="position:absolute;left:538px;top:982.3px" width="16" height="16" viewBox="0 0 16 16"><rect x="2" y="0.800" width="12" height="14.400" fill="#2a2e38" stroke="#111" stroke-width="0.600"/><path d="M3.200 1.500v13M12.800 1.500v13" stroke="#d8d8d8" stroke-width="1.200" stroke-dasharray="1.500 1.200"/><rect x="5" y="2.500" width="6" height="5" fill="#3a8ad8"/><rect x="5" y="8.500" width="6" height="5" fill="#d8a838"/></svg>
<div class="t" style="left:559.2px;top:982px;letter-spacing:-0.391px;">Видео</div>
<svg style="position:absolute;left:538px;top:1006px" width="16" height="16" viewBox="0 0 16 16"><path d="M2.500 1h11v14h-11z" fill="#fbe08a" stroke="#e8c860" stroke-width="0.900"/><path d="M3.500 1.500v13" stroke="#fff0b8" stroke-width="1.300"/></svg>
<div class="t" style="left:559.2px;top:1006px;letter-spacing:0.052px;">ИП Леонов</div>
<div style="position:absolute;left:1029px;top:820px;width:1px;height:25px;background:#e5e5e5"></div>
<div style="position:absolute;left:1227px;top:820px;width:1px;height:25px;background:#e5e5e5"></div>
<div style="position:absolute;left:1354px;top:820px;width:1px;height:25px;background:#e5e5e5"></div>
<div style="position:absolute;left:1481px;top:820px;width:1px;height:25px;background:#e5e5e5"></div>
<div class="t" style="left:887.2px;top:824px;color:#4c607a;letter-spacing:0.863px;">Имя</div>
<div class="t" style="left:1035.2px;top:824px;color:#4c607a;letter-spacing:0.942px;">Тип</div>
<div class="t" style="left:1233.6px;top:824px;color:#4c607a;letter-spacing:0.114px;">Общий размер</div>
<div class="t" style="left:1360.8px;top:824px;color:#4c607a;letter-spacing:0.033px;">Свободно</div>
<svg style="position:absolute;left:950px;top:819px" width="11" height="6"><path d="M1.500 5l4-3.500 4 3.500" fill="none" stroke="#777" stroke-width="1"/></svg>
<svg style="position:absolute;left:878.5px;top:857px" width="7" height="12"><path d="M1 1l4.500 5-4.500 5" fill="none" stroke="#8a8a8a" stroke-width="1"/></svg>
<div class="t" style="left:891.9px;top:853px;font-size:14.5px;color:#1e3764;letter-spacing:0.471px;line-height:20px;height:20px;">Папки (6)</div>
<div style="position:absolute;left:965px;top:863px;width:672px;height:1px;background:#e2e2e2"></div>
<svg style="position:absolute;left:876.5px;top:888.5px" width="12" height="8"><path d="M1 1l5 5 5-5" fill="none" stroke="#444" stroke-width="1.1"/></svg>
<div class="t" style="left:891.9px;top:883px;font-size:14.5px;color:#1e3764;letter-spacing:0.194px;line-height:20px;height:20px;">Устройства и диски (3)</div>
<div style="position:absolute;left:1056px;top:893px;width:581px;height:1px;background:#e2e2e2"></div>
<svg style="position:absolute;left:888.5px;top:910px" width="16" height="16" viewBox="0 0 16 16"><path d="M1 1h2.500v2.500h-2.500zM4.200 1h2.500v2.500h-2.500zM1 4.200h2.500v2.500h-2.500zM4.200 4.200h2.500v2.500h-2.500z" fill="#1e90f0"/><path d="M4 8h10l1.500 2.500h-13z" fill="#d0d4d8"/><rect x="2" y="10.500" width="13.500" height="3.500" fill="#2a2c30"/><rect x="11.500" y="11.700" width="3" height="1" fill="#e8e8e8"/></svg>
<div class="t" style="left:908.2px;top:911px;letter-spacing:-0.020px;">Локальный диск (C:)</div>
<div class="t" style="left:1035.2px;top:911px;color:#6d6d6d;letter-spacing:0.128px;">Локальный диск</div>
<div class="t" style="left:1310.2px;top:911px;color:#6d6d6d;letter-spacing:-0.594px;">55,7 ГБ</div>
<div class="t" style="left:1437.2px;top:911px;color:#6d6d6d;letter-spacing:-0.660px;">27,5 ГБ</div>
<svg style="position:absolute;left:888.5px;top:931px" width="16" height="16" viewBox="0 0 16 16"><path d="M3 7.500h10l2 3h-14z" fill="#d0d4d8"/><rect x="1" y="10.500" width="14" height="3.500" fill="#2a2c30"/><rect x="11" y="11.700" width="3" height="1" fill="#e8e8e8"/></svg>
<div class="t" style="left:908.2px;top:932px;letter-spacing:-0.106px;">Локальный диск (E:)</div>
<div class="t" style="left:1035.2px;top:932px;color:#6d6d6d;letter-spacing:0.128px;">Локальный диск</div>
<div class="t" style="left:1313.6px;top:932px;color:#6d6d6d;letter-spacing:-0.727px;">232 ГБ</div>
<div class="t" style="left:1437.2px;top:932px;color:#6d6d6d;letter-spacing:-0.660px;">37,5 ГБ</div>
<svg style="position:absolute;left:888.5px;top:952px" width="16" height="16" viewBox="0 0 16 16"><circle cx="10" cy="5" r="4.800" fill="#eceef0" stroke="#9a9ea4" stroke-width="0.900"/><circle cx="10" cy="5" r="1.600" fill="#fff" stroke="#8a8e94" stroke-width="0.800"/><path d="M2.500 9.500h11l1.500 2h-14z" fill="#c8ccd0"/><rect x="1" y="11" width="14" height="3.500" fill="#2a2c30"/><rect x="11" y="12.300" width="3" height="1" fill="#e8e8e8"/></svg>
<div class="t" style="left:908.2px;top:953px;letter-spacing:-0.328px;">DVD RW дисковод (...</div>
<div class="t" style="left:1035.2px;top:953px;color:#6d6d6d;letter-spacing:0.025px;">CD-дисковод</div>
</div>
<div style="position:absolute;left:0;top:1030.500px;width:1650px;height:3px;background:#15191f"></div><div style="position:absolute;left:0;top:1030.500px;width:255px;height:3px;background:#4a5057"></div>
</body></html>
